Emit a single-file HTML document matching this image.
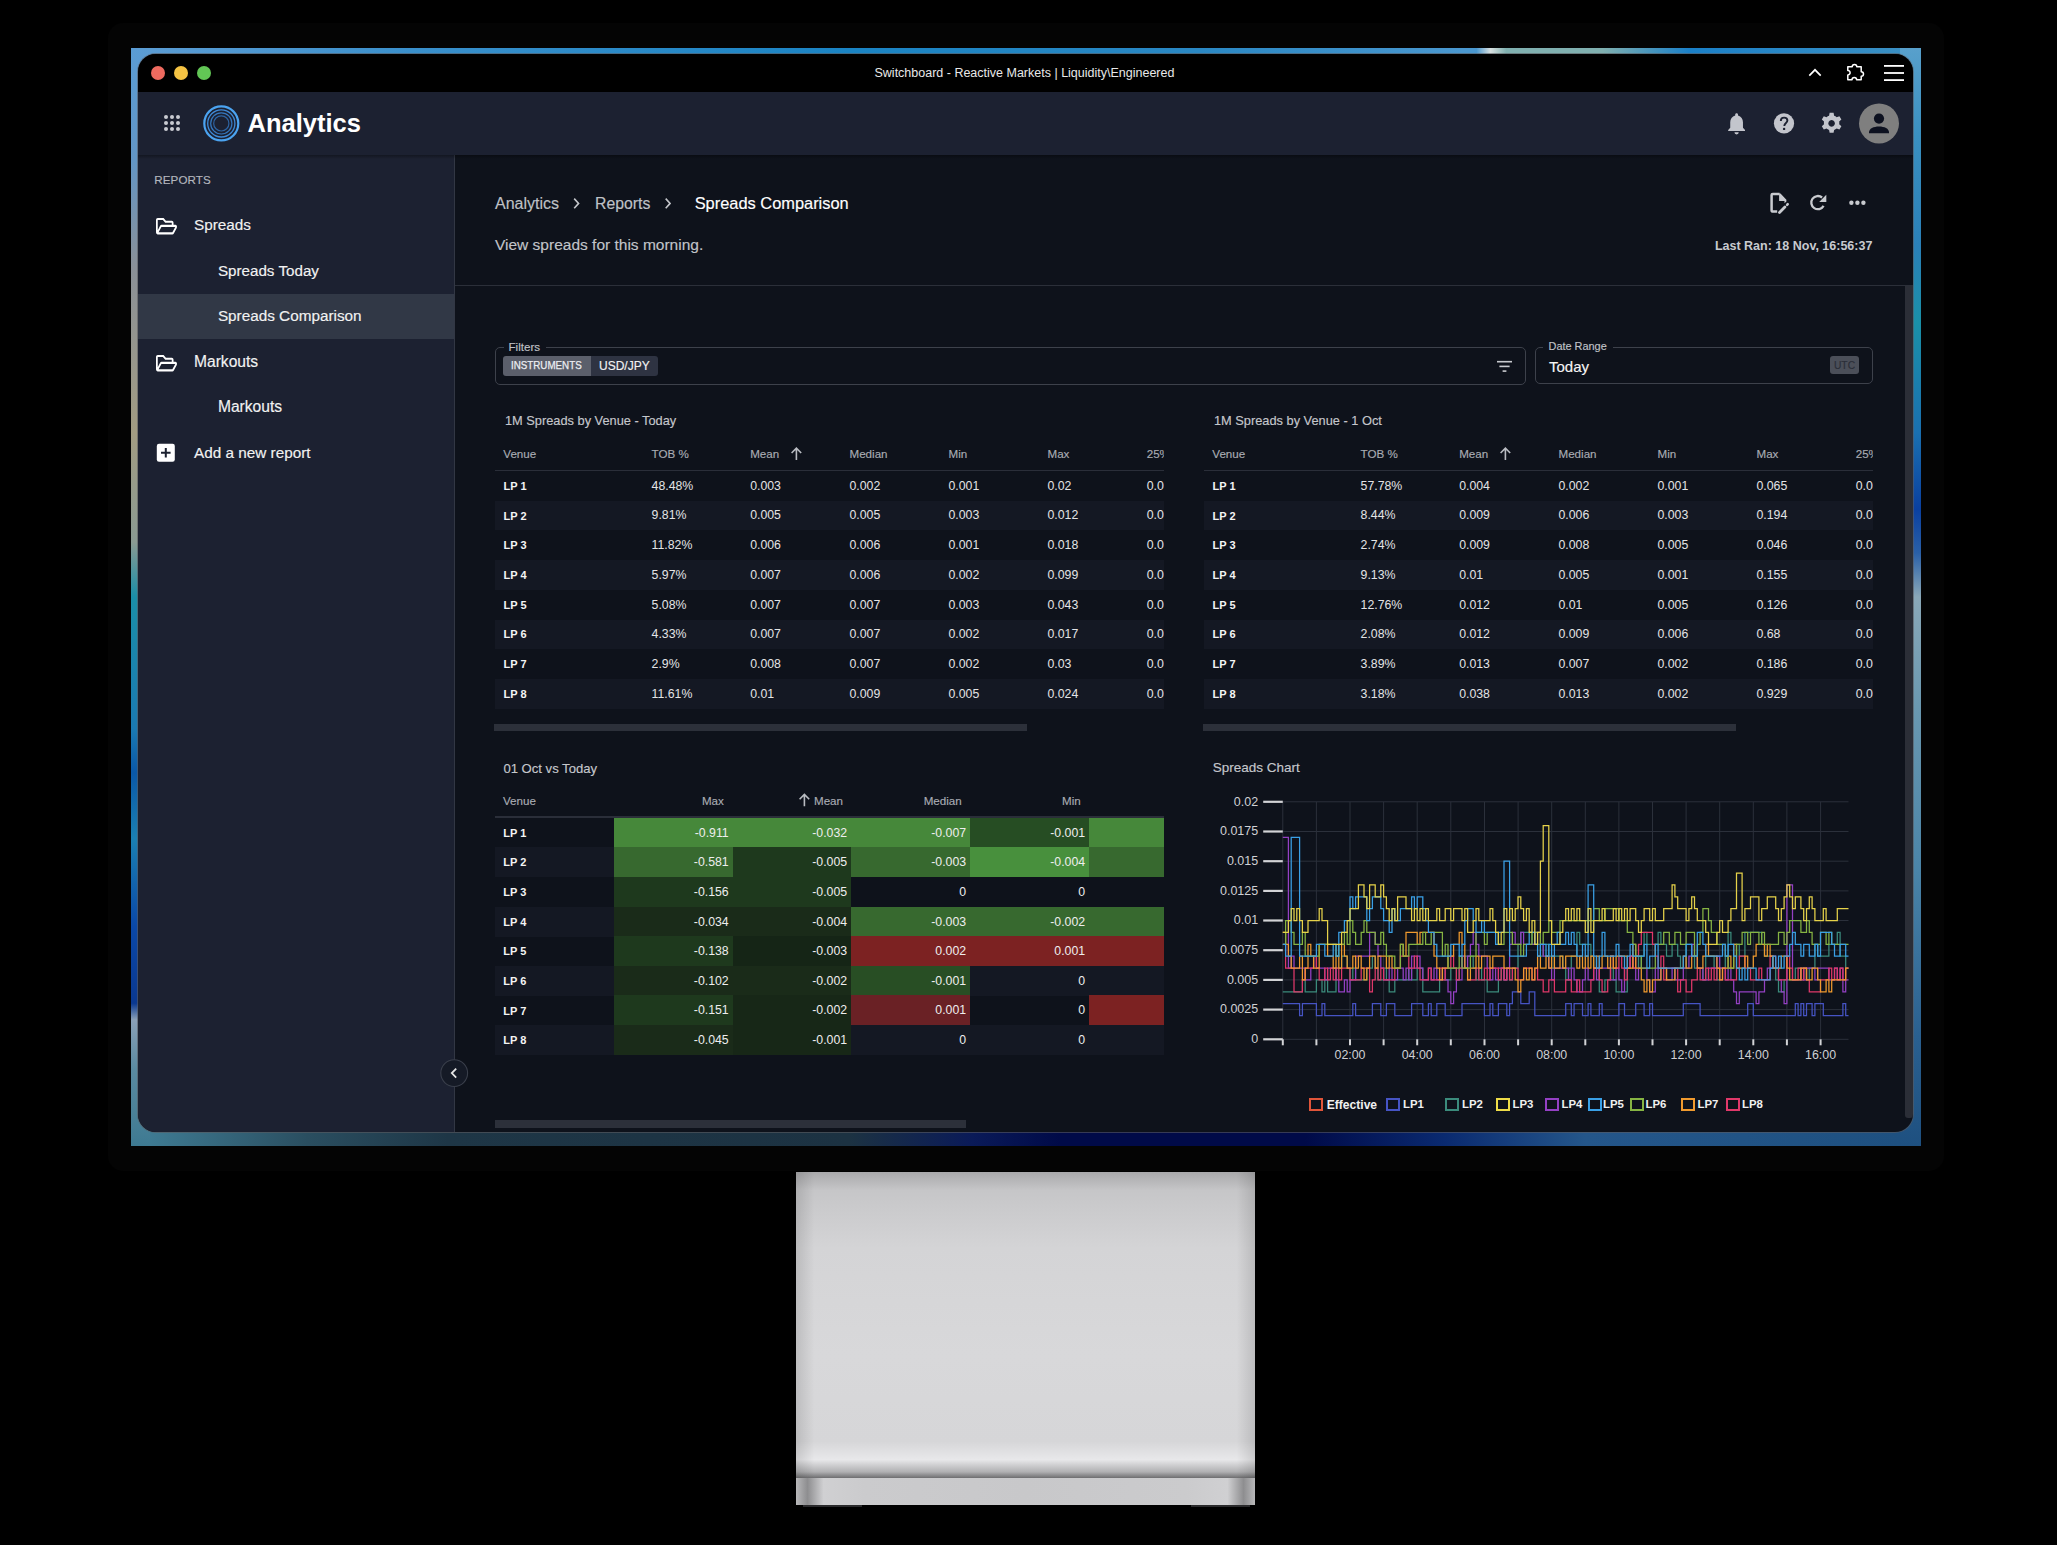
<!DOCTYPE html>
<html><head><meta charset="utf-8"><title>Switchboard</title>
<style>
html,body{margin:0;padding:0;}
body{width:2057px;height:1545px;background:#000;position:relative;overflow:hidden;font-family:"Liberation Sans", sans-serif;}
.t{position:absolute;white-space:nowrap;line-height:1;-webkit-text-stroke:0.15px currentColor;}
.ns{-webkit-text-stroke:0 !important;}
.r{position:absolute;}
svg{position:absolute;}
</style></head><body>

<div class="r" style="left:108.0px;top:23.0px;width:1836.0px;height:1148.0px;background:#040404;border-radius:15px;"></div>
<div class="r" style="left:131px;top:48px;width:1790px;height:1098px;background:linear-gradient(90deg,#3e7a92 0%,#2a4e62 25%,#24465c 45%,#0a1a58 52%,#000a48 68%,#0a2a70 76%,#2a5a8c 85%,#2f6a9a 100%);"></div>
<div class="r" style="left:131.0px;top:48.0px;width:24.0px;height:1098.0px;background:linear-gradient(180deg,#5a9cd4 0%,#6296c6 10%,#8a9098 20%,#a29c82 35%,#8a9a92 45%,#1a8fa8 50%,#1a7ab2 62%,#0a58a8 66%,#1a80b2 72%,#0a48a8 80%,#0a3890 87%,#8aa0b8 88.5%,#5a8aa0 93%,#3e7a92 100%);"></div>
<div class="r" style="left:1897.0px;top:48.0px;width:24.0px;height:1098.0px;background:linear-gradient(180deg,#58a0cc 0%,#3a90c0 8%,#2a80b8 18%,#1a90a8 25%,#1a70b0 35%,#0a40a0 42%,#2a60a8 46%,#8aa8b8 50%,#6a98b0 60%,#4a84a8 75%,#2a6090 90%,#1e5080 100%);"></div>
<div class="r" style="left:150.0px;top:48.0px;width:1750.0px;height:20.0px;background:linear-gradient(90deg,#5a9cd4 0%,#3a90cc 15%,#1a84c4 40%,#2a88c4 60%,#4a98d0 75%,#4a98d0 75.8%,#d8e0e0 76.6%,#80b0b0 77.5%,#80b0b0 83%,#1a80c8 88%,#3a90c4 100%);"></div>
<div class="r" style="left:150.0px;top:1118.0px;width:1750.0px;height:28.0px;background:linear-gradient(90deg,#3e7a92 0%,#2a4e60 9%,#1e3646 17%,#1c3242 40%,#0a1a58 47%,#000a48 52%,#000a48 66%,#0a2a70 74%,#24568a 82%,#1e5080 100%);"></div>
<div class="r" style="left:137.0px;top:53.0px;width:1777.0px;height:1080.0px;background:rgba(90,90,95,0.6);border-radius:19px;"></div>
<div class="r" style="left:0;top:0;width:2057px;height:1545px;clip-path:inset(54px 144px 413px 138px round 18px);">
<div class="r" style="left:138.0px;top:54.0px;width:1775.0px;height:1078.0px;background:#0e121b;"></div>
<div class="r" style="left:138.0px;top:54.0px;width:1775.0px;height:38.0px;background:#000;"></div>
<div class="r" style="left:150.9px;top:66.0px;width:14.0px;height:14.0px;background:#ee6a5f;border-radius:50%;"></div>
<div class="r" style="left:173.7px;top:66.0px;width:14.0px;height:14.0px;background:#f5c343;border-radius:50%;"></div>
<div class="r" style="left:196.5px;top:66.0px;width:14.0px;height:14.0px;background:#62c655;border-radius:50%;"></div>
<div class="t ns" style="left:874.5px;top:66.7px;font-size:12.5px;color:#e9e9e9;">Switchboard - Reactive Markets | Liquidity\Engineered</div>
<svg style="left:1800px;top:58px" width="115" height="30" viewBox="1800 58 115 30">
<path d="M1809.3 75.6 L1815 69.8 L1820.7 75.6" fill="none" stroke="#fff" stroke-width="1.7"/>
<path d="M1847.8 66.8 H1852.2 A2.3 2.3 0 1 1 1856.8 66.8 H1861.2 V71.7 A2.3 2.3 0 1 1 1861.2 76.3 V79.8 H1856.6 A2.3 2.3 0 1 0 1852.0 79.8 H1847.8 V75.0 A2.3 2.3 0 1 0 1847.8 70.4 Z" fill="none" stroke="#fff" stroke-width="1.5" stroke-linejoin="round"/>
<rect x="1884" y="65" width="20" height="1.8" fill="#fff"/>
<rect x="1884" y="72.1" width="20" height="1.8" fill="#fff"/>
<rect x="1884" y="79.2" width="20" height="1.8" fill="#fff"/>
</svg>
<div class="r" style="left:138.0px;top:92.0px;width:1775.0px;height:63.0px;background:#1c2131;"></div>
<div class="r" style="left:163.5px;top:115.3px;width:4.2px;height:4.2px;background:#c9cbd1;border-radius:50%;"></div>
<div class="r" style="left:163.5px;top:121.3px;width:4.2px;height:4.2px;background:#c9cbd1;border-radius:50%;"></div>
<div class="r" style="left:163.5px;top:127.3px;width:4.2px;height:4.2px;background:#c9cbd1;border-radius:50%;"></div>
<div class="r" style="left:169.5px;top:115.3px;width:4.2px;height:4.2px;background:#c9cbd1;border-radius:50%;"></div>
<div class="r" style="left:169.5px;top:121.3px;width:4.2px;height:4.2px;background:#c9cbd1;border-radius:50%;"></div>
<div class="r" style="left:169.5px;top:127.3px;width:4.2px;height:4.2px;background:#c9cbd1;border-radius:50%;"></div>
<div class="r" style="left:175.5px;top:115.3px;width:4.2px;height:4.2px;background:#c9cbd1;border-radius:50%;"></div>
<div class="r" style="left:175.5px;top:121.3px;width:4.2px;height:4.2px;background:#c9cbd1;border-radius:50%;"></div>
<div class="r" style="left:175.5px;top:127.3px;width:4.2px;height:4.2px;background:#c9cbd1;border-radius:50%;"></div>
<svg style="left:200px;top:102px" width="44" height="44" viewBox="0 0 44 44">
<circle cx="21.3" cy="21.4" r="17" fill="none" stroke="#4ba3f0" stroke-width="2.2"/>
<circle cx="21.3" cy="21.4" r="13.6" fill="none" stroke="#3f8ad6" stroke-width="1.3"/>
<circle cx="21.3" cy="21.4" r="10.6" fill="none" stroke="#3577bd" stroke-width="1.2"/>
<circle cx="21.3" cy="21.4" r="7.6" fill="none" stroke="#2e64a2" stroke-width="1.2"/>
</svg>
<div class="t " style="left:247.5px;top:111.0px;font-size:25.5px;color:#ffffff;font-weight:700;-webkit-text-stroke:0;">Analytics</div>
<svg style="left:1720px;top:100px" width="185" height="48" viewBox="1720 100 185 48">
<path transform="translate(1736.6 124.6) scale(1.08) translate(-1736.6 -122.6)" d="M1736.6 112.2 c0.8 0 1.3 0.6 1.3 1.3 v0.6 c2.9 0.7 4.6 3.2 4.6 6.3 v5.2 l1.9 2.1 v0.9 h-15.6 v-0.9 l1.9 -2.1 v-5.2 c0 -3.1 1.7 -5.6 4.6 -6.3 v-0.6 c0 -0.7 0.5 -1.3 1.3 -1.3 z M1734.6 129.7 h4 a2 2 0 0 1 -4 0 z" fill="#c3c5cc"/>
<circle cx="1784" cy="123.4" r="10.1" fill="#c3c5cc"/>
<path d="M1780.8 120.9 c0 -2 1.4 -3.3 3.3 -3.3 c1.9 0 3.3 1.3 3.3 3 c0 2.3 -3.1 2.5 -3.1 5.3" fill="none" stroke="#1c2131" stroke-width="1.9"/>
<circle cx="1784.1" cy="128.9" r="1.2" fill="#1c2131"/>
<g transform="translate(1831.6 123.4) scale(1.1)" fill="#c3c5cc">
<path d="M-1.8 -9.6 h3.6 l0.5 2.6 a7.3 7.3 0 0 1 2.3 1.3 l2.5 -0.9 l1.8 3.1 l-2 1.7 a7.3 7.3 0 0 1 0 2.6 l2 1.7 l-1.8 3.1 l-2.5 -0.9 a7.3 7.3 0 0 1 -2.3 1.3 l-0.5 2.6 h-3.6 l-0.5 -2.6 a7.3 7.3 0 0 1 -2.3 -1.3 l-2.5 0.9 l-1.8 -3.1 l2 -1.7 a7.3 7.3 0 0 1 0 -2.6 l-2 -1.7 l1.8 -3.1 l2.5 0.9 a7.3 7.3 0 0 1 2.3 -1.3 z M0 -3 a3 3 0 1 0 0.01 0 z" fill-rule="evenodd"/>
</g>
<circle cx="1879" cy="123.4" r="20" fill="#7f7f7f"/>
<circle cx="1879" cy="118.6" r="5.1" fill="#0d1120"/>
<path d="M1869 132.4 c0 -4 4.5 -6.0 10 -6.0 s10 2.0 10 6.0 v0.8 h-20 z" fill="#0d1120"/>
</svg>
<div class="r" style="left:138.0px;top:155.0px;width:316.0px;height:977.0px;background:#1c2131;"></div>
<div class="r" style="left:454.0px;top:155.0px;width:1.0px;height:977.0px;background:#323744;"></div>
<div class="r" style="left:138.0px;top:155.0px;width:1775.0px;height:4.0px;background:linear-gradient(180deg,rgba(0,0,0,0.32),rgba(0,0,0,0));"></div>
<div class="r" style="left:138.0px;top:294.0px;width:316.0px;height:45.3px;background:#313846;"></div>
<div class="t " style="left:154.3px;top:174.3px;font-size:11.6px;color:#b4b7be;letter-spacing:0.1px;">REPORTS</div>
<svg style="left:155.8px;top:218.1px" width="23" height="18" viewBox="0 0 23 18"><path transform="scale(0.0365 0.0427) translate(0 -64)" d="M527.9 224H480v-48c0-26.5-21.5-48-48-48H272l-64-64H48C21.5 64 0 85.5 0 112v288c0 26.5 21.5 48 48 48h400c16.5 0 31.9-8.5 40.7-22.6l79.9-128c20-31.9-3-73.4-40.7-73.4zM48 118c0-3.300 2.7-6 6-6h134.1l64 64H426c3.3 0 6 2.7 6 6v42H152c-16.8 0-32.4 8.8-41.1 23.2L48 351.4zm400 282H72l77.2-128H528z" fill="#fff"/></svg>
<svg style="left:155.8px;top:355.3px" width="23" height="18" viewBox="0 0 23 18"><path transform="scale(0.0365 0.0427) translate(0 -64)" d="M527.9 224H480v-48c0-26.5-21.5-48-48-48H272l-64-64H48C21.5 64 0 85.5 0 112v288c0 26.5 21.5 48 48 48h400c16.5 0 31.9-8.5 40.7-22.6l79.9-128c20-31.9-3-73.4-40.7-73.4zM48 118c0-3.300 2.7-6 6-6h134.1l64 64H426c3.3 0 6 2.7 6 6v42H152c-16.8 0-32.4 8.8-41.1 23.2L48 351.4zm400 282H72l77.2-128H528z" fill="#fff"/></svg>
<div class="t " style="left:194.0px;top:217.1px;font-size:15.3px;color:#f2f2f2;">Spreads</div>
<div class="t " style="left:217.9px;top:263.1px;font-size:15.2px;color:#f2f2f2;">Spreads Today</div>
<div class="t " style="left:217.9px;top:308.3px;font-size:15.3px;color:#f2f2f2;">Spreads Comparison</div>
<div class="t " style="left:194.0px;top:354.0px;font-size:15.6px;color:#f2f2f2;">Markouts</div>
<div class="t " style="left:217.9px;top:399.1px;font-size:15.6px;color:#f2f2f2;">Markouts</div>
<div class="t " style="left:194.0px;top:445.2px;font-size:15.3px;color:#f2f2f2;">Add a new report</div>
<svg style="left:156px;top:443px" width="20" height="20" viewBox="0 0 20 20">
<rect x="0.8" y="0.8" width="18" height="18" rx="2.2" fill="#fff"/>
<path d="M9.8 5 v9.6 M5 9.8 h9.6" stroke="#1b2030" stroke-width="2"/>
</svg>
<svg style="left:438px;top:1057px" width="32" height="32" viewBox="0 0 32 32">
<circle cx="16.2" cy="16.1" r="13.4" fill="#151a26" stroke="#3a3f4b" stroke-width="1.1"/>
<path d="M18.2 11.6 L13.8 16.1 L18.2 20.6" fill="none" stroke="#e6e6e6" stroke-width="1.8"/>
</svg>
<div class="t " style="left:495.0px;top:195.5px;font-size:16.0px;color:#bfc1c6;">Analytics</div>
<div class="t " style="left:595.0px;top:195.6px;font-size:15.8px;color:#bfc1c6;">Reports</div>
<div class="t " style="left:694.7px;top:195.1px;font-size:16.4px;color:#ffffff;">Spreads Comparison</div>
<svg style="left:565px;top:190px" width="120" height="26" viewBox="565 190 120 26">
<path d="M574.2 198.6 L578.6 203.4 L574.2 208.2" fill="none" stroke="#c3c5ca" stroke-width="1.6"/>
<path d="M665.7 198.6 L670.1 203.4 L665.7 208.2" fill="none" stroke="#c3c5ca" stroke-width="1.6"/>
</svg>
<div class="t " style="left:495.0px;top:237.1px;font-size:15.5px;color:#c2c4c9;">View spreads for this morning.</div>
<div class="t " style="right:184.6px;top:239.8px;font-size:12.5px;color:#c8cacf;font-weight:700;-webkit-text-stroke:0;">Last Ran: 18 Nov, 16:56:37</div>
<svg style="left:1760px;top:185px" width="115" height="36" viewBox="1760 185 115 36">
<path d="M1777.2 211.6 h-4.4 a1.2 1.2 0 0 1 -1.2 -1.2 v-15.3 a1.2 1.2 0 0 1 1.2 -1.2 h6.8" fill="none" stroke="#c8cacf" stroke-width="2.5" stroke-linejoin="round"/>
<path d="M1779.1 193.6 h1.4 l5.9 6.1 v1.9 l-1.9 1.6 v-2.3 h-5.4 z" fill="#c8cacf"/>
<path d="M1779.5 212.4 l5.4 -5.4" stroke="#c8cacf" stroke-width="2.8" stroke-linecap="round"/>
<path d="M1787.1 204.8 l0.6 -0.6" stroke="#c8cacf" stroke-width="2.6" stroke-linecap="round"/>
<path d="M1823.6 205.9 A6.6 6.6 0 1 1 1822.1 197.5" fill="none" stroke="#c8cacf" stroke-width="2.3"/>
<path d="M1819.2 201.9 L1826.3 194.8 L1826.3 201.9 Z" fill="#c8cacf"/>
<circle cx="1851.4" cy="202.8" r="2.2" fill="#c8cacf"/>
<circle cx="1857.4" cy="202.8" r="2.2" fill="#c8cacf"/>
<circle cx="1863.4" cy="202.8" r="2.2" fill="#c8cacf"/>
</svg>
<div class="r" style="left:455.0px;top:285.0px;width:1458.0px;height:1.0px;background:#2b2f39;"></div>
<div class="r" style="left:1905.0px;top:286.0px;width:7.5px;height:832.0px;background:#2b2e37;border-radius:0 0 3px 3px;"></div>
<div class="r" style="left:494.6px;top:347.2px;width:1031px;height:37.6px;border:1px solid #3d414b;border-radius:5px;box-sizing:border-box;"></div>
<div class="r" style="left:504.0px;top:344.0px;width:42.0px;height:6.0px;background:#0e121b;"></div>
<div class="t " style="left:508.5px;top:340.5px;font-size:11.6px;color:#c0c2c7;">Filters</div>
<div class="r" style="left:503.0px;top:356.0px;width:88.0px;height:20.0px;background:#5b5f6b;border-radius:3px 0 0 3px;"></div>
<div class="r" style="left:591.0px;top:356.0px;width:67.0px;height:20.0px;background:#2e3342;border-radius:0 3px 3px 0;"></div>
<div class="t " style="left:511.1px;top:360.4px;font-size:11.2px;color:#eceef2;transform:scaleX(0.875);transform-origin:0 0;-webkit-text-stroke:0.25px #eceef2;">INSTRUMENTS</div>
<div class="t " style="left:599.0px;top:359.8px;font-size:12.0px;color:#f2f2f2;">USD/JPY</div>
<svg style="left:1494px;top:358px" width="20" height="16" viewBox="1494 358 20 16">
<rect x="1497" y="360.9" width="15" height="1.6" fill="#c8cacf"/>
<rect x="1499.4" y="365.6" width="10.2" height="1.6" fill="#c8cacf"/>
<rect x="1502.6" y="370.3" width="3.8" height="1.6" fill="#c8cacf"/>
</svg>
<div class="r" style="left:1534.6px;top:347.4px;width:338.2px;height:37px;border:1px solid #3d414b;border-radius:5px;box-sizing:border-box;"></div>
<div class="r" style="left:1543.0px;top:344.0px;width:70.0px;height:6.0px;background:#0e121b;"></div>
<div class="t " style="left:1548.6px;top:341.2px;font-size:10.9px;color:#c0c2c7;">Date Range</div>
<div class="t " style="left:1549.0px;top:358.7px;font-size:15.0px;color:#f5f5f5;">Today</div>
<div class="r" style="left:1830.2px;top:356.1px;width:28.6px;height:18.4px;background:#4b4f59;border-radius:3px;"></div>
<div class="t " style="left:1844.5px;transform:translateX(-50%);top:360.6px;font-size:10.3px;color:#2a2e38;">UTC</div>
<div class="t " style="left:505.0px;top:415.1px;font-size:12.8px;color:#c5c7cc;">1M Spreads by Venue - Today</div>
<div class="r" style="left:0;top:0;width:2057px;height:1545px;clip-path:inset(400px 893.0px 800px 494.8px);">
<div class="t " style="left:503.3px;top:447.8px;font-size:11.6px;color:#a9acb3;">Venue</div>
<div class="t " style="left:651.6px;top:447.8px;font-size:11.6px;color:#a9acb3;">TOB %</div>
<div class="t " style="left:750.2px;top:447.8px;font-size:11.6px;color:#a9acb3;">Mean</div>
<div class="t " style="left:849.5px;top:447.8px;font-size:11.6px;color:#a9acb3;">Median</div>
<div class="t " style="left:948.5px;top:447.8px;font-size:11.6px;color:#a9acb3;">Min</div>
<div class="t " style="left:1047.5px;top:447.8px;font-size:11.6px;color:#a9acb3;">Max</div>
<div class="t " style="left:1146.7px;top:447.8px;font-size:11.6px;color:#a9acb3;">25%</div>
<svg style="left:786px;top:446px" width="20" height="16" viewBox="0 0 20 16"><path d="M10.4 2.4 v11.6 M5.6 7 L10.4 2.2 L15.2 7" fill="none" stroke="#b9bcc2" stroke-width="1.6"/></svg>
<div class="r" style="left:494.8px;top:469.6px;width:669.2px;height:1.2px;background:#2a2e39;"></div>
<div class="t " style="left:503.6px;top:480.8px;font-size:11.0px;color:#f4f4f4;font-weight:700;-webkit-text-stroke:0;">LP 1</div>
<div class="t ns" style="left:651.6px;top:479.7px;font-size:12.3px;color:#e3e4e6;">48.48%</div>
<div class="t ns" style="left:750.2px;top:479.7px;font-size:12.3px;color:#e3e4e6;">0.003</div>
<div class="t ns" style="left:849.5px;top:479.7px;font-size:12.3px;color:#e3e4e6;">0.002</div>
<div class="t ns" style="left:948.5px;top:479.7px;font-size:12.3px;color:#e3e4e6;">0.001</div>
<div class="t ns" style="left:1047.5px;top:479.7px;font-size:12.3px;color:#e3e4e6;">0.02</div>
<div class="t ns" style="left:1146.7px;top:479.7px;font-size:12.3px;color:#e3e4e6;">0.003</div>
<div class="r" style="left:494.8px;top:500.7px;width:669.2px;height:29.7px;background:#141823;"></div>
<div class="t " style="left:503.6px;top:510.5px;font-size:11.0px;color:#f4f4f4;font-weight:700;-webkit-text-stroke:0;">LP 2</div>
<div class="t ns" style="left:651.6px;top:509.4px;font-size:12.3px;color:#e3e4e6;">9.81%</div>
<div class="t ns" style="left:750.2px;top:509.4px;font-size:12.3px;color:#e3e4e6;">0.005</div>
<div class="t ns" style="left:849.5px;top:509.4px;font-size:12.3px;color:#e3e4e6;">0.005</div>
<div class="t ns" style="left:948.5px;top:509.4px;font-size:12.3px;color:#e3e4e6;">0.003</div>
<div class="t ns" style="left:1047.5px;top:509.4px;font-size:12.3px;color:#e3e4e6;">0.012</div>
<div class="t ns" style="left:1146.7px;top:509.4px;font-size:12.3px;color:#e3e4e6;">0.004</div>
<div class="t " style="left:503.6px;top:540.2px;font-size:11.0px;color:#f4f4f4;font-weight:700;-webkit-text-stroke:0;">LP 3</div>
<div class="t ns" style="left:651.6px;top:539.1px;font-size:12.3px;color:#e3e4e6;">11.82%</div>
<div class="t ns" style="left:750.2px;top:539.1px;font-size:12.3px;color:#e3e4e6;">0.006</div>
<div class="t ns" style="left:849.5px;top:539.1px;font-size:12.3px;color:#e3e4e6;">0.006</div>
<div class="t ns" style="left:948.5px;top:539.1px;font-size:12.3px;color:#e3e4e6;">0.001</div>
<div class="t ns" style="left:1047.5px;top:539.1px;font-size:12.3px;color:#e3e4e6;">0.018</div>
<div class="t ns" style="left:1146.7px;top:539.1px;font-size:12.3px;color:#e3e4e6;">0.004</div>
<div class="r" style="left:494.8px;top:560.1px;width:669.2px;height:29.7px;background:#141823;"></div>
<div class="t " style="left:503.6px;top:569.9px;font-size:11.0px;color:#f4f4f4;font-weight:700;-webkit-text-stroke:0;">LP 4</div>
<div class="t ns" style="left:651.6px;top:568.8px;font-size:12.3px;color:#e3e4e6;">5.97%</div>
<div class="t ns" style="left:750.2px;top:568.8px;font-size:12.3px;color:#e3e4e6;">0.007</div>
<div class="t ns" style="left:849.5px;top:568.8px;font-size:12.3px;color:#e3e4e6;">0.006</div>
<div class="t ns" style="left:948.5px;top:568.8px;font-size:12.3px;color:#e3e4e6;">0.002</div>
<div class="t ns" style="left:1047.5px;top:568.8px;font-size:12.3px;color:#e3e4e6;">0.099</div>
<div class="t ns" style="left:1146.7px;top:568.8px;font-size:12.3px;color:#e3e4e6;">0.004</div>
<div class="t " style="left:503.6px;top:599.6px;font-size:11.0px;color:#f4f4f4;font-weight:700;-webkit-text-stroke:0;">LP 5</div>
<div class="t ns" style="left:651.6px;top:598.5px;font-size:12.3px;color:#e3e4e6;">5.08%</div>
<div class="t ns" style="left:750.2px;top:598.5px;font-size:12.3px;color:#e3e4e6;">0.007</div>
<div class="t ns" style="left:849.5px;top:598.5px;font-size:12.3px;color:#e3e4e6;">0.007</div>
<div class="t ns" style="left:948.5px;top:598.5px;font-size:12.3px;color:#e3e4e6;">0.003</div>
<div class="t ns" style="left:1047.5px;top:598.5px;font-size:12.3px;color:#e3e4e6;">0.043</div>
<div class="t ns" style="left:1146.7px;top:598.5px;font-size:12.3px;color:#e3e4e6;">0.005</div>
<div class="r" style="left:494.8px;top:619.5px;width:669.2px;height:29.7px;background:#141823;"></div>
<div class="t " style="left:503.6px;top:629.3px;font-size:11.0px;color:#f4f4f4;font-weight:700;-webkit-text-stroke:0;">LP 6</div>
<div class="t ns" style="left:651.6px;top:628.2px;font-size:12.3px;color:#e3e4e6;">4.33%</div>
<div class="t ns" style="left:750.2px;top:628.2px;font-size:12.3px;color:#e3e4e6;">0.007</div>
<div class="t ns" style="left:849.5px;top:628.2px;font-size:12.3px;color:#e3e4e6;">0.007</div>
<div class="t ns" style="left:948.5px;top:628.2px;font-size:12.3px;color:#e3e4e6;">0.002</div>
<div class="t ns" style="left:1047.5px;top:628.2px;font-size:12.3px;color:#e3e4e6;">0.017</div>
<div class="t ns" style="left:1146.7px;top:628.2px;font-size:12.3px;color:#e3e4e6;">0.005</div>
<div class="t " style="left:503.6px;top:659.0px;font-size:11.0px;color:#f4f4f4;font-weight:700;-webkit-text-stroke:0;">LP 7</div>
<div class="t ns" style="left:651.6px;top:657.9px;font-size:12.3px;color:#e3e4e6;">2.9%</div>
<div class="t ns" style="left:750.2px;top:657.9px;font-size:12.3px;color:#e3e4e6;">0.008</div>
<div class="t ns" style="left:849.5px;top:657.9px;font-size:12.3px;color:#e3e4e6;">0.007</div>
<div class="t ns" style="left:948.5px;top:657.9px;font-size:12.3px;color:#e3e4e6;">0.002</div>
<div class="t ns" style="left:1047.5px;top:657.9px;font-size:12.3px;color:#e3e4e6;">0.03</div>
<div class="t ns" style="left:1146.7px;top:657.9px;font-size:12.3px;color:#e3e4e6;">0.005</div>
<div class="r" style="left:494.8px;top:678.9px;width:669.2px;height:29.7px;background:#141823;"></div>
<div class="t " style="left:503.6px;top:688.7px;font-size:11.0px;color:#f4f4f4;font-weight:700;-webkit-text-stroke:0;">LP 8</div>
<div class="t ns" style="left:651.6px;top:687.6px;font-size:12.3px;color:#e3e4e6;">11.61%</div>
<div class="t ns" style="left:750.2px;top:687.6px;font-size:12.3px;color:#e3e4e6;">0.01</div>
<div class="t ns" style="left:849.5px;top:687.6px;font-size:12.3px;color:#e3e4e6;">0.009</div>
<div class="t ns" style="left:948.5px;top:687.6px;font-size:12.3px;color:#e3e4e6;">0.005</div>
<div class="t ns" style="left:1047.5px;top:687.6px;font-size:12.3px;color:#e3e4e6;">0.024</div>
<div class="t ns" style="left:1146.7px;top:687.6px;font-size:12.3px;color:#e3e4e6;">0.006</div>
</div>
<div class="t " style="left:1214.0px;top:415.1px;font-size:12.8px;color:#c5c7cc;">1M Spreads by Venue - 1 Oct</div>
<div class="r" style="left:0;top:0;width:2057px;height:1545px;clip-path:inset(400px 184.0px 800px 1203.8px);">
<div class="t " style="left:1212.3px;top:447.8px;font-size:11.6px;color:#a9acb3;">Venue</div>
<div class="t " style="left:1360.6px;top:447.8px;font-size:11.6px;color:#a9acb3;">TOB %</div>
<div class="t " style="left:1459.2px;top:447.8px;font-size:11.6px;color:#a9acb3;">Mean</div>
<div class="t " style="left:1558.5px;top:447.8px;font-size:11.6px;color:#a9acb3;">Median</div>
<div class="t " style="left:1657.5px;top:447.8px;font-size:11.6px;color:#a9acb3;">Min</div>
<div class="t " style="left:1756.5px;top:447.8px;font-size:11.6px;color:#a9acb3;">Max</div>
<div class="t " style="left:1855.7px;top:447.8px;font-size:11.6px;color:#a9acb3;">25%</div>
<svg style="left:1495px;top:446px" width="20" height="16" viewBox="0 0 20 16"><path d="M10.4 2.4 v11.6 M5.6 7 L10.4 2.2 L15.2 7" fill="none" stroke="#b9bcc2" stroke-width="1.6"/></svg>
<div class="r" style="left:1203.8px;top:469.6px;width:669.2px;height:1.2px;background:#2a2e39;"></div>
<div class="t " style="left:1212.6px;top:480.8px;font-size:11.0px;color:#f4f4f4;font-weight:700;-webkit-text-stroke:0;">LP 1</div>
<div class="t ns" style="left:1360.6px;top:479.7px;font-size:12.3px;color:#e3e4e6;">57.78%</div>
<div class="t ns" style="left:1459.2px;top:479.7px;font-size:12.3px;color:#e3e4e6;">0.004</div>
<div class="t ns" style="left:1558.5px;top:479.7px;font-size:12.3px;color:#e3e4e6;">0.002</div>
<div class="t ns" style="left:1657.5px;top:479.7px;font-size:12.3px;color:#e3e4e6;">0.001</div>
<div class="t ns" style="left:1756.5px;top:479.7px;font-size:12.3px;color:#e3e4e6;">0.065</div>
<div class="t ns" style="left:1855.7px;top:479.7px;font-size:12.3px;color:#e3e4e6;">0.003</div>
<div class="r" style="left:1203.8px;top:500.7px;width:669.2px;height:29.7px;background:#141823;"></div>
<div class="t " style="left:1212.6px;top:510.5px;font-size:11.0px;color:#f4f4f4;font-weight:700;-webkit-text-stroke:0;">LP 2</div>
<div class="t ns" style="left:1360.6px;top:509.4px;font-size:12.3px;color:#e3e4e6;">8.44%</div>
<div class="t ns" style="left:1459.2px;top:509.4px;font-size:12.3px;color:#e3e4e6;">0.009</div>
<div class="t ns" style="left:1558.5px;top:509.4px;font-size:12.3px;color:#e3e4e6;">0.006</div>
<div class="t ns" style="left:1657.5px;top:509.4px;font-size:12.3px;color:#e3e4e6;">0.003</div>
<div class="t ns" style="left:1756.5px;top:509.4px;font-size:12.3px;color:#e3e4e6;">0.194</div>
<div class="t ns" style="left:1855.7px;top:509.4px;font-size:12.3px;color:#e3e4e6;">0.004</div>
<div class="t " style="left:1212.6px;top:540.2px;font-size:11.0px;color:#f4f4f4;font-weight:700;-webkit-text-stroke:0;">LP 3</div>
<div class="t ns" style="left:1360.6px;top:539.1px;font-size:12.3px;color:#e3e4e6;">2.74%</div>
<div class="t ns" style="left:1459.2px;top:539.1px;font-size:12.3px;color:#e3e4e6;">0.009</div>
<div class="t ns" style="left:1558.5px;top:539.1px;font-size:12.3px;color:#e3e4e6;">0.008</div>
<div class="t ns" style="left:1657.5px;top:539.1px;font-size:12.3px;color:#e3e4e6;">0.005</div>
<div class="t ns" style="left:1756.5px;top:539.1px;font-size:12.3px;color:#e3e4e6;">0.046</div>
<div class="t ns" style="left:1855.7px;top:539.1px;font-size:12.3px;color:#e3e4e6;">0.006</div>
<div class="r" style="left:1203.8px;top:560.1px;width:669.2px;height:29.7px;background:#141823;"></div>
<div class="t " style="left:1212.6px;top:569.9px;font-size:11.0px;color:#f4f4f4;font-weight:700;-webkit-text-stroke:0;">LP 4</div>
<div class="t ns" style="left:1360.6px;top:568.8px;font-size:12.3px;color:#e3e4e6;">9.13%</div>
<div class="t ns" style="left:1459.2px;top:568.8px;font-size:12.3px;color:#e3e4e6;">0.01</div>
<div class="t ns" style="left:1558.5px;top:568.8px;font-size:12.3px;color:#e3e4e6;">0.005</div>
<div class="t ns" style="left:1657.5px;top:568.8px;font-size:12.3px;color:#e3e4e6;">0.001</div>
<div class="t ns" style="left:1756.5px;top:568.8px;font-size:12.3px;color:#e3e4e6;">0.155</div>
<div class="t ns" style="left:1855.7px;top:568.8px;font-size:12.3px;color:#e3e4e6;">0.004</div>
<div class="t " style="left:1212.6px;top:599.6px;font-size:11.0px;color:#f4f4f4;font-weight:700;-webkit-text-stroke:0;">LP 5</div>
<div class="t ns" style="left:1360.6px;top:598.5px;font-size:12.3px;color:#e3e4e6;">12.76%</div>
<div class="t ns" style="left:1459.2px;top:598.5px;font-size:12.3px;color:#e3e4e6;">0.012</div>
<div class="t ns" style="left:1558.5px;top:598.5px;font-size:12.3px;color:#e3e4e6;">0.01</div>
<div class="t ns" style="left:1657.5px;top:598.5px;font-size:12.3px;color:#e3e4e6;">0.005</div>
<div class="t ns" style="left:1756.5px;top:598.5px;font-size:12.3px;color:#e3e4e6;">0.126</div>
<div class="t ns" style="left:1855.7px;top:598.5px;font-size:12.3px;color:#e3e4e6;">0.007</div>
<div class="r" style="left:1203.8px;top:619.5px;width:669.2px;height:29.7px;background:#141823;"></div>
<div class="t " style="left:1212.6px;top:629.3px;font-size:11.0px;color:#f4f4f4;font-weight:700;-webkit-text-stroke:0;">LP 6</div>
<div class="t ns" style="left:1360.6px;top:628.2px;font-size:12.3px;color:#e3e4e6;">2.08%</div>
<div class="t ns" style="left:1459.2px;top:628.2px;font-size:12.3px;color:#e3e4e6;">0.012</div>
<div class="t ns" style="left:1558.5px;top:628.2px;font-size:12.3px;color:#e3e4e6;">0.009</div>
<div class="t ns" style="left:1657.5px;top:628.2px;font-size:12.3px;color:#e3e4e6;">0.006</div>
<div class="t ns" style="left:1756.5px;top:628.2px;font-size:12.3px;color:#e3e4e6;">0.68</div>
<div class="t ns" style="left:1855.7px;top:628.2px;font-size:12.3px;color:#e3e4e6;">0.006</div>
<div class="t " style="left:1212.6px;top:659.0px;font-size:11.0px;color:#f4f4f4;font-weight:700;-webkit-text-stroke:0;">LP 7</div>
<div class="t ns" style="left:1360.6px;top:657.9px;font-size:12.3px;color:#e3e4e6;">3.89%</div>
<div class="t ns" style="left:1459.2px;top:657.9px;font-size:12.3px;color:#e3e4e6;">0.013</div>
<div class="t ns" style="left:1558.5px;top:657.9px;font-size:12.3px;color:#e3e4e6;">0.007</div>
<div class="t ns" style="left:1657.5px;top:657.9px;font-size:12.3px;color:#e3e4e6;">0.002</div>
<div class="t ns" style="left:1756.5px;top:657.9px;font-size:12.3px;color:#e3e4e6;">0.186</div>
<div class="t ns" style="left:1855.7px;top:657.9px;font-size:12.3px;color:#e3e4e6;">0.005</div>
<div class="r" style="left:1203.8px;top:678.9px;width:669.2px;height:29.7px;background:#141823;"></div>
<div class="t " style="left:1212.6px;top:688.7px;font-size:11.0px;color:#f4f4f4;font-weight:700;-webkit-text-stroke:0;">LP 8</div>
<div class="t ns" style="left:1360.6px;top:687.6px;font-size:12.3px;color:#e3e4e6;">3.18%</div>
<div class="t ns" style="left:1459.2px;top:687.6px;font-size:12.3px;color:#e3e4e6;">0.038</div>
<div class="t ns" style="left:1558.5px;top:687.6px;font-size:12.3px;color:#e3e4e6;">0.013</div>
<div class="t ns" style="left:1657.5px;top:687.6px;font-size:12.3px;color:#e3e4e6;">0.002</div>
<div class="t ns" style="left:1756.5px;top:687.6px;font-size:12.3px;color:#e3e4e6;">0.929</div>
<div class="t ns" style="left:1855.7px;top:687.6px;font-size:12.3px;color:#e3e4e6;">0.007</div>
</div>
<div class="r" style="left:494.4px;top:724.0px;width:532.4px;height:7.2px;background:#2c303a;"></div>
<div class="r" style="left:1203.4px;top:724.0px;width:532.4px;height:7.2px;background:#2c303a;"></div>
<div class="t " style="left:503.4px;top:761.5px;font-size:13.1px;color:#c5c7cc;">01 Oct vs Today</div>
<div class="t " style="left:503.0px;top:795.4px;font-size:11.6px;color:#a9acb3;">Venue</div>
<div class="t " style="right:1333.2px;top:795.4px;font-size:11.6px;color:#a9acb3;">Max</div>
<div class="t " style="right:1214.0px;top:795.4px;font-size:11.6px;color:#a9acb3;">Mean</div>
<div class="t " style="right:1095.3px;top:795.4px;font-size:11.6px;color:#a9acb3;">Median</div>
<div class="t " style="right:976.3px;top:795.4px;font-size:11.6px;color:#a9acb3;">Min</div>
<svg style="left:794px;top:792px" width="20" height="16" viewBox="0 0 20 16"><path d="M10.4 2.6 v11.6 M5.6 7.2 L10.4 2.4 L15.2 7.2" fill="none" stroke="#b9bcc2" stroke-width="1.6"/></svg>
<div class="r" style="left:494.8px;top:816.4px;width:669.2px;height:1.2px;background:#2a2e39;"></div>
<div class="r" style="left:613.5px;top:817.6px;width:119.0px;height:30.2px;background:#46883a;"></div>
<div class="r" style="left:732.5px;top:817.6px;width:118.4px;height:30.2px;background:#46883a;"></div>
<div class="r" style="left:850.9px;top:817.6px;width:119.0px;height:30.2px;background:#46883a;"></div>
<div class="r" style="left:969.9px;top:817.6px;width:119.0px;height:30.2px;background:#264d23;"></div>
<div class="r" style="left:1088.9px;top:817.6px;width:75.1px;height:30.2px;background:#46883a;"></div>
<div class="t " style="left:503.3px;top:827.7px;font-size:11.0px;color:#f4f4f4;font-weight:700;-webkit-text-stroke:0;">LP 1</div>
<div class="t ns" style="right:1328.3px;top:826.6px;font-size:12.3px;color:#eeeeee;">-0.911</div>
<div class="t ns" style="right:1209.9px;top:826.6px;font-size:12.3px;color:#eeeeee;">-0.032</div>
<div class="t ns" style="right:1090.9px;top:826.6px;font-size:12.3px;color:#eeeeee;">-0.007</div>
<div class="t ns" style="right:971.9px;top:826.6px;font-size:12.3px;color:#eeeeee;">-0.001</div>
<div class="r" style="left:494.8px;top:847.2px;width:669.2px;height:30.2px;background:#141823;"></div>
<div class="r" style="left:613.5px;top:847.2px;width:119.0px;height:30.2px;background:#37692f;"></div>
<div class="r" style="left:732.5px;top:847.2px;width:118.4px;height:30.2px;background:#1e391d;"></div>
<div class="r" style="left:850.9px;top:847.2px;width:119.0px;height:30.2px;background:#37692f;"></div>
<div class="r" style="left:969.9px;top:847.2px;width:119.0px;height:30.2px;background:#48903d;"></div>
<div class="r" style="left:1088.9px;top:847.2px;width:75.1px;height:30.2px;background:#37692f;"></div>
<div class="t " style="left:503.3px;top:857.3px;font-size:11.0px;color:#f4f4f4;font-weight:700;-webkit-text-stroke:0;">LP 2</div>
<div class="t ns" style="right:1328.3px;top:856.2px;font-size:12.3px;color:#eeeeee;">-0.581</div>
<div class="t ns" style="right:1209.9px;top:856.2px;font-size:12.3px;color:#eeeeee;">-0.005</div>
<div class="t ns" style="right:1090.9px;top:856.2px;font-size:12.3px;color:#eeeeee;">-0.003</div>
<div class="t ns" style="right:971.9px;top:856.2px;font-size:12.3px;color:#eeeeee;">-0.004</div>
<div class="r" style="left:613.5px;top:876.9px;width:119.0px;height:30.2px;background:#1e391d;"></div>
<div class="r" style="left:732.5px;top:876.9px;width:118.4px;height:30.2px;background:#1e391d;"></div>
<div class="t " style="left:503.3px;top:886.9px;font-size:11.0px;color:#f4f4f4;font-weight:700;-webkit-text-stroke:0;">LP 3</div>
<div class="t ns" style="right:1328.3px;top:885.8px;font-size:12.3px;color:#eeeeee;">-0.156</div>
<div class="t ns" style="right:1209.9px;top:885.8px;font-size:12.3px;color:#eeeeee;">-0.005</div>
<div class="t ns" style="right:1090.9px;top:885.8px;font-size:12.3px;color:#eeeeee;">0</div>
<div class="t ns" style="right:971.9px;top:885.8px;font-size:12.3px;color:#eeeeee;">0</div>
<div class="r" style="left:494.8px;top:906.5px;width:669.2px;height:30.2px;background:#141823;"></div>
<div class="r" style="left:613.5px;top:906.5px;width:119.0px;height:30.2px;background:#1a2b19;"></div>
<div class="r" style="left:732.5px;top:906.5px;width:118.4px;height:30.2px;background:#1a2b19;"></div>
<div class="r" style="left:850.9px;top:906.5px;width:119.0px;height:30.2px;background:#37692f;"></div>
<div class="r" style="left:969.9px;top:906.5px;width:119.0px;height:30.2px;background:#37692f;"></div>
<div class="r" style="left:1088.9px;top:906.5px;width:75.1px;height:30.2px;background:#37692f;"></div>
<div class="t " style="left:503.3px;top:916.6px;font-size:11.0px;color:#f4f4f4;font-weight:700;-webkit-text-stroke:0;">LP 4</div>
<div class="t ns" style="right:1328.3px;top:915.5px;font-size:12.3px;color:#eeeeee;">-0.034</div>
<div class="t ns" style="right:1209.9px;top:915.5px;font-size:12.3px;color:#eeeeee;">-0.004</div>
<div class="t ns" style="right:1090.9px;top:915.5px;font-size:12.3px;color:#eeeeee;">-0.003</div>
<div class="t ns" style="right:971.9px;top:915.5px;font-size:12.3px;color:#eeeeee;">-0.002</div>
<div class="r" style="left:613.5px;top:936.1px;width:119.0px;height:30.2px;background:#1e391d;"></div>
<div class="r" style="left:732.5px;top:936.1px;width:118.4px;height:30.2px;background:#152516;"></div>
<div class="r" style="left:850.9px;top:936.1px;width:119.0px;height:30.2px;background:#7c2222;"></div>
<div class="r" style="left:969.9px;top:936.1px;width:119.0px;height:30.2px;background:#7c2222;"></div>
<div class="r" style="left:1088.9px;top:936.1px;width:75.1px;height:30.2px;background:#7c2222;"></div>
<div class="t " style="left:503.3px;top:946.2px;font-size:11.0px;color:#f4f4f4;font-weight:700;-webkit-text-stroke:0;">LP 5</div>
<div class="t ns" style="right:1328.3px;top:945.1px;font-size:12.3px;color:#eeeeee;">-0.138</div>
<div class="t ns" style="right:1209.9px;top:945.1px;font-size:12.3px;color:#eeeeee;">-0.003</div>
<div class="t ns" style="right:1090.9px;top:945.1px;font-size:12.3px;color:#eeeeee;">0.002</div>
<div class="t ns" style="right:971.9px;top:945.1px;font-size:12.3px;color:#eeeeee;">0.001</div>
<div class="r" style="left:494.8px;top:965.8px;width:669.2px;height:30.2px;background:#141823;"></div>
<div class="r" style="left:613.5px;top:965.8px;width:119.0px;height:30.2px;background:#1a2b19;"></div>
<div class="r" style="left:732.5px;top:965.8px;width:118.4px;height:30.2px;background:#1a2b19;"></div>
<div class="r" style="left:850.9px;top:965.8px;width:119.0px;height:30.2px;background:#284e24;"></div>
<div class="t " style="left:503.3px;top:975.8px;font-size:11.0px;color:#f4f4f4;font-weight:700;-webkit-text-stroke:0;">LP 6</div>
<div class="t ns" style="right:1328.3px;top:974.7px;font-size:12.3px;color:#eeeeee;">-0.102</div>
<div class="t ns" style="right:1209.9px;top:974.7px;font-size:12.3px;color:#eeeeee;">-0.002</div>
<div class="t ns" style="right:1090.9px;top:974.7px;font-size:12.3px;color:#eeeeee;">-0.001</div>
<div class="t ns" style="right:971.9px;top:974.7px;font-size:12.3px;color:#eeeeee;">0</div>
<div class="r" style="left:613.5px;top:995.4px;width:119.0px;height:30.2px;background:#1e391d;"></div>
<div class="r" style="left:732.5px;top:995.4px;width:118.4px;height:30.2px;background:#172717;"></div>
<div class="r" style="left:850.9px;top:995.4px;width:119.0px;height:30.2px;background:#6a2125;"></div>
<div class="r" style="left:1088.9px;top:995.4px;width:75.1px;height:30.2px;background:#7c2222;"></div>
<div class="t " style="left:503.3px;top:1005.5px;font-size:11.0px;color:#f4f4f4;font-weight:700;-webkit-text-stroke:0;">LP 7</div>
<div class="t ns" style="right:1328.3px;top:1004.4px;font-size:12.3px;color:#eeeeee;">-0.151</div>
<div class="t ns" style="right:1209.9px;top:1004.4px;font-size:12.3px;color:#eeeeee;">-0.002</div>
<div class="t ns" style="right:1090.9px;top:1004.4px;font-size:12.3px;color:#eeeeee;">0.001</div>
<div class="t ns" style="right:971.9px;top:1004.4px;font-size:12.3px;color:#eeeeee;">0</div>
<div class="r" style="left:494.8px;top:1025.0px;width:669.2px;height:30.2px;background:#141823;"></div>
<div class="r" style="left:613.5px;top:1025.0px;width:119.0px;height:30.2px;background:#1a2b19;"></div>
<div class="r" style="left:732.5px;top:1025.0px;width:118.4px;height:30.2px;background:#172717;"></div>
<div class="t " style="left:503.3px;top:1035.1px;font-size:11.0px;color:#f4f4f4;font-weight:700;-webkit-text-stroke:0;">LP 8</div>
<div class="t ns" style="right:1328.3px;top:1034.0px;font-size:12.3px;color:#eeeeee;">-0.045</div>
<div class="t ns" style="right:1209.9px;top:1034.0px;font-size:12.3px;color:#eeeeee;">-0.001</div>
<div class="t ns" style="right:1090.9px;top:1034.0px;font-size:12.3px;color:#eeeeee;">0</div>
<div class="t ns" style="right:971.9px;top:1034.0px;font-size:12.3px;color:#eeeeee;">0</div>
<div class="r" style="left:494.5px;top:1120.2px;width:471.5px;height:7.4px;background:#2c303a;"></div>
<div class="t " style="left:1212.8px;top:761.0px;font-size:13.5px;color:#c5c7cc;">Spreads Chart</div>
<svg style="left:1190px;top:790px" width="680" height="290" viewBox="1190 790 680 290">
<line x1="1282.8" y1="1039.3" x2="1848.5" y2="1039.3" stroke="#2b303b" stroke-width="1"/>
<line x1="1282.8" y1="1009.6" x2="1848.5" y2="1009.6" stroke="#2b303b" stroke-width="1"/>
<line x1="1282.8" y1="979.9" x2="1848.5" y2="979.9" stroke="#2b303b" stroke-width="1"/>
<line x1="1282.8" y1="950.2" x2="1848.5" y2="950.2" stroke="#2b303b" stroke-width="1"/>
<line x1="1282.8" y1="920.5" x2="1848.5" y2="920.5" stroke="#2b303b" stroke-width="1"/>
<line x1="1282.8" y1="890.9" x2="1848.5" y2="890.9" stroke="#2b303b" stroke-width="1"/>
<line x1="1282.8" y1="861.2" x2="1848.5" y2="861.2" stroke="#2b303b" stroke-width="1"/>
<line x1="1282.8" y1="831.5" x2="1848.5" y2="831.5" stroke="#2b303b" stroke-width="1"/>
<line x1="1282.8" y1="801.8" x2="1848.5" y2="801.8" stroke="#2b303b" stroke-width="1"/>
<line x1="1282.8" y1="801.8" x2="1282.8" y2="1039.3" stroke="#2b303b" stroke-width="1"/>
<line x1="1316.4" y1="801.8" x2="1316.4" y2="1039.3" stroke="#2b303b" stroke-width="1"/>
<line x1="1350.0" y1="801.8" x2="1350.0" y2="1039.3" stroke="#2b303b" stroke-width="1"/>
<line x1="1383.6" y1="801.8" x2="1383.6" y2="1039.3" stroke="#2b303b" stroke-width="1"/>
<line x1="1417.2" y1="801.8" x2="1417.2" y2="1039.3" stroke="#2b303b" stroke-width="1"/>
<line x1="1450.8" y1="801.8" x2="1450.8" y2="1039.3" stroke="#2b303b" stroke-width="1"/>
<line x1="1484.5" y1="801.8" x2="1484.5" y2="1039.3" stroke="#2b303b" stroke-width="1"/>
<line x1="1518.1" y1="801.8" x2="1518.1" y2="1039.3" stroke="#2b303b" stroke-width="1"/>
<line x1="1551.7" y1="801.8" x2="1551.7" y2="1039.3" stroke="#2b303b" stroke-width="1"/>
<line x1="1585.3" y1="801.8" x2="1585.3" y2="1039.3" stroke="#2b303b" stroke-width="1"/>
<line x1="1618.9" y1="801.8" x2="1618.9" y2="1039.3" stroke="#2b303b" stroke-width="1"/>
<line x1="1652.5" y1="801.8" x2="1652.5" y2="1039.3" stroke="#2b303b" stroke-width="1"/>
<line x1="1686.1" y1="801.8" x2="1686.1" y2="1039.3" stroke="#2b303b" stroke-width="1"/>
<line x1="1719.7" y1="801.8" x2="1719.7" y2="1039.3" stroke="#2b303b" stroke-width="1"/>
<line x1="1753.3" y1="801.8" x2="1753.3" y2="1039.3" stroke="#2b303b" stroke-width="1"/>
<line x1="1786.9" y1="801.8" x2="1786.9" y2="1039.3" stroke="#2b303b" stroke-width="1"/>
<line x1="1820.6" y1="801.8" x2="1820.6" y2="1039.3" stroke="#2b303b" stroke-width="1"/>
<polyline points="1282.8,1003.7 1285.6,1003.7 1285.6,1003.7 1288.4,1003.7 1288.4,1003.7 1291.2,1003.7 1291.2,1003.7 1294.0,1003.7 1294.0,1003.7 1296.8,1003.7 1296.8,1003.7 1299.6,1003.7 1299.6,1015.5 1302.4,1015.5 1302.4,1003.7 1305.2,1003.7 1305.2,1003.7 1308.0,1003.7 1308.0,1003.7 1310.8,1003.7 1310.8,1003.7 1313.6,1003.7 1313.6,1003.7 1316.4,1003.7 1316.4,1015.5 1319.2,1015.5 1319.2,1015.5 1322.0,1015.5 1322.0,1003.7 1324.8,1003.7 1324.8,1015.5 1327.6,1015.5 1327.6,1015.5 1330.4,1015.5 1330.4,1015.5 1333.2,1015.5 1333.2,1015.5 1336.0,1015.5 1336.0,1015.5 1338.8,1015.5 1338.8,1015.5 1341.6,1015.5 1341.6,1015.5 1344.4,1015.5 1344.4,1015.5 1347.2,1015.5 1347.2,1015.5 1350.0,1015.5 1350.0,1015.5 1352.8,1015.5 1352.8,1003.7 1355.6,1003.7 1355.6,1015.5 1358.4,1015.5 1358.4,1015.5 1361.2,1015.5 1361.2,1015.5 1364.0,1015.5 1364.0,1015.5 1366.8,1015.5 1366.8,1015.5 1369.6,1015.5 1369.6,1015.5 1372.4,1015.5 1372.4,1003.7 1375.2,1003.7 1375.2,1003.7 1378.0,1003.7 1378.0,1003.7 1380.8,1003.7 1380.8,1015.5 1383.6,1015.5 1383.6,1015.5 1386.4,1015.5 1386.4,1003.7 1389.2,1003.7 1389.2,1003.7 1392.0,1003.7 1392.0,1003.7 1394.8,1003.7 1394.8,1015.5 1397.6,1015.5 1397.6,1015.5 1400.4,1015.5 1400.4,1015.5 1403.2,1015.5 1403.2,1015.5 1406.0,1015.5 1406.0,1015.5 1408.8,1015.5 1408.8,1015.5 1411.6,1015.5 1411.6,1003.7 1414.4,1003.7 1414.4,1003.7 1417.2,1003.7 1417.2,1003.7 1420.0,1003.7 1420.0,1003.7 1422.8,1003.7 1422.8,1015.5 1425.6,1015.5 1425.6,1015.5 1428.4,1015.5 1428.4,1003.7 1431.2,1003.7 1431.2,1015.5 1434.0,1015.5 1434.0,1015.5 1436.8,1015.5 1436.8,1003.7 1439.6,1003.7 1439.6,1003.7 1442.4,1003.7 1442.4,1003.7 1445.2,1003.7 1445.2,1015.5 1448.0,1015.5 1448.0,1015.5 1450.8,1015.5 1450.8,1015.5 1453.6,1015.5 1453.6,1015.5 1456.4,1015.5 1456.4,1015.5 1459.2,1015.5 1459.2,1015.5 1462.0,1015.5 1462.0,1003.7 1464.8,1003.7 1464.8,1003.7 1467.6,1003.7 1467.6,1003.7 1470.4,1003.7 1470.4,1003.7 1473.2,1003.7 1473.2,1003.7 1476.0,1003.7 1476.0,1003.7 1478.8,1003.7 1478.8,1003.7 1481.6,1003.7 1481.6,1003.7 1484.4,1003.7 1484.4,1015.5 1487.2,1015.5 1487.2,1015.5 1490.0,1015.5 1490.0,1003.7 1492.8,1003.7 1492.8,1015.5 1495.6,1015.5 1495.6,1015.5 1498.4,1015.5 1498.4,1003.7 1501.2,1003.7 1501.2,1003.7 1504.0,1003.7 1504.0,1003.7 1506.8,1003.7 1506.8,1015.5 1509.6,1015.5 1509.6,1003.7 1512.4,1003.7 1512.4,991.8 1515.2,991.8 1515.2,991.8 1518.0,991.8 1518.0,991.8 1520.8,991.8 1520.8,1003.7 1523.6,1003.7 1523.6,1003.7 1526.4,1003.7 1526.4,1003.7 1529.2,1003.7 1529.2,991.8 1532.0,991.8 1532.0,991.8 1534.8,991.8 1534.8,1015.5 1537.6,1015.5 1537.6,1015.5 1540.4,1015.5 1540.4,1015.5 1543.2,1015.5 1543.2,1015.5 1546.0,1015.5 1546.0,1015.5 1548.8,1015.5 1548.8,1015.5 1551.6,1015.5 1551.6,1015.5 1554.4,1015.5 1554.4,1015.5 1557.2,1015.5 1557.2,1015.5 1560.0,1015.5 1560.0,1015.5 1562.8,1015.5 1562.8,1015.5 1565.7,1015.5 1565.7,1003.7 1568.5,1003.7 1568.5,1003.7 1571.3,1003.7 1571.3,1015.5 1574.1,1015.5 1574.1,1003.7 1576.9,1003.7 1576.9,1003.7 1579.7,1003.7 1579.7,1003.7 1582.5,1003.7 1582.5,1015.5 1585.3,1015.5 1585.3,1015.5 1588.1,1015.5 1588.1,1003.7 1590.9,1003.7 1590.9,1015.5 1593.7,1015.5 1593.7,1015.5 1596.5,1015.5 1596.5,1015.5 1599.3,1015.5 1599.3,1003.7 1602.1,1003.7 1602.1,1015.5 1604.9,1015.5 1604.9,1015.5 1607.7,1015.5 1607.7,1015.5 1610.5,1015.5 1610.5,1015.5 1613.3,1015.5 1613.3,1015.5 1616.1,1015.5 1616.1,1015.5 1618.9,1015.5 1618.9,1003.7 1621.7,1003.7 1621.7,1003.7 1624.5,1003.7 1624.5,1015.5 1627.3,1015.5 1627.3,1015.5 1630.1,1015.5 1630.1,1015.5 1632.9,1015.5 1632.9,1015.5 1635.7,1015.5 1635.7,1003.7 1638.5,1003.7 1638.5,1003.7 1641.3,1003.7 1641.3,1003.7 1644.1,1003.7 1644.1,1015.5 1646.9,1015.5 1646.9,1015.5 1649.7,1015.5 1649.7,1003.7 1652.5,1003.7 1652.5,1015.5 1655.3,1015.5 1655.3,1015.5 1658.1,1015.5 1658.1,1015.5 1660.9,1015.5 1660.9,1015.5 1663.7,1015.5 1663.7,1015.5 1666.5,1015.5 1666.5,1015.5 1669.3,1015.5 1669.3,1015.5 1672.1,1015.5 1672.1,1015.5 1674.9,1015.5 1674.9,1015.5 1677.7,1015.5 1677.7,1015.5 1680.5,1015.5 1680.5,1015.5 1683.3,1015.5 1683.3,1003.7 1686.1,1003.7 1686.1,1003.7 1688.9,1003.7 1688.9,1003.7 1691.7,1003.7 1691.7,1003.7 1694.5,1003.7 1694.5,1003.7 1697.3,1003.7 1697.3,1003.7 1700.1,1003.7 1700.1,1015.5 1702.9,1015.5 1702.9,1015.5 1705.7,1015.5 1705.7,1015.5 1708.5,1015.5 1708.5,1015.5 1711.3,1015.5 1711.3,1015.5 1714.1,1015.5 1714.1,1015.5 1716.9,1015.5 1716.9,1015.5 1719.7,1015.5 1719.7,1015.5 1722.5,1015.5 1722.5,1015.5 1725.3,1015.5 1725.3,1015.5 1728.1,1015.5 1728.1,1015.5 1730.9,1015.5 1730.9,1015.5 1733.7,1015.5 1733.7,1015.5 1736.5,1015.5 1736.5,1015.5 1739.3,1015.5 1739.3,1015.5 1742.1,1015.5 1742.1,1015.5 1744.9,1015.5 1744.9,1015.5 1747.7,1015.5 1747.7,1003.7 1750.5,1003.7 1750.5,1003.7 1753.3,1003.7 1753.3,1015.5 1756.1,1015.5 1756.1,1015.5 1758.9,1015.5 1758.9,1015.5 1761.7,1015.5 1761.7,1015.5 1764.5,1015.5 1764.5,1015.5 1767.3,1015.5 1767.3,1015.5 1770.1,1015.5 1770.1,1015.5 1772.9,1015.5 1772.9,1015.5 1775.7,1015.5 1775.7,1015.5 1778.5,1015.5 1778.5,1015.5 1781.3,1015.5 1781.3,1015.5 1784.1,1015.5 1784.1,1015.5 1786.9,1015.5 1786.9,1015.5 1789.7,1015.5 1789.7,1015.5 1792.5,1015.5 1792.5,1015.5 1795.3,1015.5 1795.3,1003.7 1798.1,1003.7 1798.1,1015.5 1800.9,1015.5 1800.9,1003.7 1803.7,1003.7 1803.7,1015.5 1806.5,1015.5 1806.5,1003.7 1809.3,1003.7 1809.3,1003.7 1812.1,1003.7 1812.1,1015.5 1814.9,1015.5 1814.9,1003.7 1817.7,1003.7 1817.7,1003.7 1820.5,1003.7 1820.5,1003.7 1823.3,1003.7 1823.3,1015.5 1826.1,1015.5 1826.1,1015.5 1828.9,1015.5 1828.9,1015.5 1831.7,1015.5 1831.7,1015.5 1834.5,1015.5 1834.5,1015.5 1837.3,1015.5 1837.3,1015.5 1840.1,1015.5 1840.1,1015.5 1842.9,1015.5 1842.9,1003.7 1845.7,1003.7 1845.7,1015.5 1848.5,1015.5" fill="none" stroke="#4654c4" stroke-width="1.25" stroke-linejoin="miter"/>
<polyline points="1282.8,991.8 1285.6,991.8 1285.6,991.8 1288.4,991.8 1288.4,991.8 1291.2,991.8 1291.2,991.8 1294.0,991.8 1294.0,991.8 1296.8,991.8 1296.8,991.8 1299.6,991.8 1299.6,991.8 1302.4,991.8 1302.4,979.9 1305.2,979.9 1305.2,991.8 1308.0,991.8 1308.0,991.8 1310.8,991.8 1310.8,991.8 1313.6,991.8 1313.6,991.8 1316.4,991.8 1316.4,979.9 1319.2,979.9 1319.2,979.9 1322.0,979.9 1322.0,991.8 1324.8,991.8 1324.8,979.9 1327.6,979.9 1327.6,991.8 1330.4,991.8 1330.4,991.8 1333.2,991.8 1333.2,991.8 1336.0,991.8 1336.0,968.0 1338.8,968.0 1338.8,968.0 1341.6,968.0 1341.6,956.2 1344.4,956.2 1344.4,956.2 1347.2,956.2 1347.2,968.0 1350.0,968.0 1350.0,979.9 1352.8,979.9 1352.8,968.0 1355.6,968.0 1355.6,979.9 1358.4,979.9 1358.4,979.9 1361.2,979.9 1361.2,979.9 1364.0,979.9 1364.0,979.9 1366.8,979.9 1366.8,968.0 1369.6,968.0 1369.6,968.0 1372.4,968.0 1372.4,956.2 1375.2,956.2 1375.2,968.0 1378.0,968.0 1378.0,979.9 1380.8,979.9 1380.8,979.9 1383.6,979.9 1383.6,968.0 1386.4,968.0 1386.4,979.9 1389.2,979.9 1389.2,991.8 1392.0,991.8 1392.0,991.8 1394.8,991.8 1394.8,979.9 1397.6,979.9 1397.6,979.9 1400.4,979.9 1400.4,979.9 1403.2,979.9 1403.2,979.9 1406.0,979.9 1406.0,979.9 1408.8,979.9 1408.8,968.0 1411.6,968.0 1411.6,979.9 1414.4,979.9 1414.4,979.9 1417.2,979.9 1417.2,968.0 1420.0,968.0 1420.0,968.0 1422.8,968.0 1422.8,991.8 1425.6,991.8 1425.6,991.8 1428.4,991.8 1428.4,991.8 1431.2,991.8 1431.2,991.8 1434.0,991.8 1434.0,991.8 1436.8,991.8 1436.8,991.8 1439.6,991.8 1439.6,979.9 1442.4,979.9 1442.4,979.9 1445.2,979.9 1445.2,979.9 1448.0,979.9 1448.0,979.9 1450.8,979.9 1450.8,968.0 1453.6,968.0 1453.6,968.0 1456.4,968.0 1456.4,979.9 1459.2,979.9 1459.2,968.0 1462.0,968.0 1462.0,956.2 1464.8,956.2 1464.8,956.2 1467.6,956.2 1467.6,956.2 1470.4,956.2 1470.4,956.2 1473.2,956.2 1473.2,968.0 1476.0,968.0 1476.0,979.9 1478.8,979.9 1478.8,968.0 1481.6,968.0 1481.6,979.9 1484.4,979.9 1484.4,979.9 1487.2,979.9 1487.2,991.8 1490.0,991.8 1490.0,991.8 1492.8,991.8 1492.8,991.8 1495.6,991.8 1495.6,991.8 1498.4,991.8 1498.4,979.9 1501.2,979.9 1501.2,968.0 1504.0,968.0 1504.0,979.9 1506.8,979.9 1506.8,968.0 1509.6,968.0 1509.6,979.9 1512.4,979.9 1512.4,968.0 1515.2,968.0 1515.2,968.0 1518.0,968.0 1518.0,944.3 1520.8,944.3 1520.8,932.4 1523.6,932.4 1523.6,932.4 1526.4,932.4 1526.4,932.4 1529.2,932.4 1529.2,932.4 1532.0,932.4 1532.0,944.3 1534.8,944.3 1534.8,944.3 1537.6,944.3 1537.6,944.3 1540.4,944.3 1540.4,956.2 1543.2,956.2 1543.2,944.3 1546.0,944.3 1546.0,944.3 1548.8,944.3 1548.8,956.2 1551.6,956.2 1551.6,968.0 1554.4,968.0 1554.4,956.2 1557.2,956.2 1557.2,956.2 1560.0,956.2 1560.0,956.2 1562.8,956.2 1562.8,968.0 1565.7,968.0 1565.7,979.9 1568.5,979.9 1568.5,968.0 1571.3,968.0 1571.3,956.2 1574.1,956.2 1574.1,956.2 1576.9,956.2 1576.9,932.4 1579.7,932.4 1579.7,944.3 1582.5,944.3 1582.5,944.3 1585.3,944.3 1585.3,944.3 1588.1,944.3 1588.1,944.3 1590.9,944.3 1590.9,956.2 1593.7,956.2 1593.7,968.0 1596.5,968.0 1596.5,968.0 1599.3,968.0 1599.3,991.8 1602.1,991.8 1602.1,991.8 1604.9,991.8 1604.9,979.9 1607.7,979.9 1607.7,979.9 1610.5,979.9 1610.5,968.0 1613.3,968.0 1613.3,979.9 1616.1,979.9 1616.1,991.8 1618.9,991.8 1618.9,991.8 1621.7,991.8 1621.7,991.8 1624.5,991.8 1624.5,991.8 1627.3,991.8 1627.3,968.0 1630.1,968.0 1630.1,956.2 1632.9,956.2 1632.9,956.2 1635.7,956.2 1635.7,956.2 1638.5,956.2 1638.5,968.0 1641.3,968.0 1641.3,956.2 1644.1,956.2 1644.1,932.4 1646.9,932.4 1646.9,944.3 1649.7,944.3 1649.7,944.3 1652.5,944.3 1652.5,944.3 1655.3,944.3 1655.3,944.3 1658.1,944.3 1658.1,932.4 1660.9,932.4 1660.9,944.3 1663.7,944.3 1663.7,944.3 1666.5,944.3 1666.5,956.2 1669.3,956.2 1669.3,956.2 1672.1,956.2 1672.1,944.3 1674.9,944.3 1674.9,944.3 1677.7,944.3 1677.7,956.2 1680.5,956.2 1680.5,968.0 1683.3,968.0 1683.3,968.0 1686.1,968.0 1686.1,944.3 1688.9,944.3 1688.9,944.3 1691.7,944.3 1691.7,956.2 1694.5,956.2 1694.5,968.0 1697.3,968.0 1697.3,968.0 1700.1,968.0 1700.1,968.0 1702.9,968.0 1702.9,979.9 1705.7,979.9 1705.7,956.2 1708.5,956.2 1708.5,956.2 1711.3,956.2 1711.3,956.2 1714.1,956.2 1714.1,968.0 1716.9,968.0 1716.9,979.9 1719.7,979.9 1719.7,968.0 1722.5,968.0 1722.5,968.0 1725.3,968.0 1725.3,956.2 1728.1,956.2 1728.1,932.4 1730.9,932.4 1730.9,944.3 1733.7,944.3 1733.7,944.3 1736.5,944.3 1736.5,944.3 1739.3,944.3 1739.3,956.2 1742.1,956.2 1742.1,956.2 1744.9,956.2 1744.9,932.4 1747.7,932.4 1747.7,932.4 1750.5,932.4 1750.5,932.4 1753.3,932.4 1753.3,932.4 1756.1,932.4 1756.1,932.4 1758.9,932.4 1758.9,932.4 1761.7,932.4 1761.7,944.3 1764.5,944.3 1764.5,956.2 1767.3,956.2 1767.3,956.2 1770.1,956.2 1770.1,956.2 1772.9,956.2 1772.9,968.0 1775.7,968.0 1775.7,979.9 1778.5,979.9 1778.5,991.8 1781.3,991.8 1781.3,991.8 1784.1,991.8 1784.1,979.9 1786.9,979.9 1786.9,979.9 1789.7,979.9 1789.7,979.9 1792.5,979.9 1792.5,979.9 1795.3,979.9 1795.3,968.0 1798.1,968.0 1798.1,968.0 1800.9,968.0 1800.9,979.9 1803.7,979.9 1803.7,968.0 1806.5,968.0 1806.5,979.9 1809.3,979.9 1809.3,968.0 1812.1,968.0 1812.1,968.0 1814.9,968.0 1814.9,944.3 1817.7,944.3 1817.7,956.2 1820.5,956.2 1820.5,956.2 1823.3,956.2 1823.3,956.2 1826.1,956.2 1826.1,956.2 1828.9,956.2 1828.9,944.3 1831.7,944.3 1831.7,944.3 1834.5,944.3 1834.5,944.3 1837.3,944.3 1837.3,932.4 1840.1,932.4 1840.1,956.2 1842.9,956.2 1842.9,956.2 1845.7,956.2 1845.7,968.0 1848.5,968.0" fill="none" stroke="#3b8b7c" stroke-width="1.25" stroke-linejoin="miter"/>
<polyline points="1282.8,837.4 1285.6,837.4 1285.6,837.4 1288.4,837.4 1288.4,968.0 1291.2,968.0 1291.2,956.2 1294.0,956.2 1294.0,968.0 1296.8,968.0 1296.8,968.0 1299.6,968.0 1299.6,968.0 1302.4,968.0 1302.4,968.0 1305.2,968.0 1305.2,979.9 1308.0,979.9 1308.0,979.9 1310.8,979.9 1310.8,968.0 1313.6,968.0 1313.6,956.2 1316.4,956.2 1316.4,968.0 1319.2,968.0 1319.2,968.0 1322.0,968.0 1322.0,968.0 1324.8,968.0 1324.8,979.9 1327.6,979.9 1327.6,968.0 1330.4,968.0 1330.4,968.0 1333.2,968.0 1333.2,968.0 1336.0,968.0 1336.0,979.9 1338.8,979.9 1338.8,991.8 1341.6,991.8 1341.6,991.8 1344.4,991.8 1344.4,979.9 1347.2,979.9 1347.2,991.8 1350.0,991.8 1350.0,979.9 1352.8,979.9 1352.8,979.9 1355.6,979.9 1355.6,956.2 1358.4,956.2 1358.4,956.2 1361.2,956.2 1361.2,956.2 1364.0,956.2 1364.0,956.2 1366.8,956.2 1366.8,956.2 1369.6,956.2 1369.6,932.4 1372.4,932.4 1372.4,932.4 1375.2,932.4 1375.2,944.3 1378.0,944.3 1378.0,956.2 1380.8,956.2 1380.8,968.0 1383.6,968.0 1383.6,979.9 1386.4,979.9 1386.4,979.9 1389.2,979.9 1389.2,968.0 1392.0,968.0 1392.0,979.9 1394.8,979.9 1394.8,979.9 1397.6,979.9 1397.6,968.0 1400.4,968.0 1400.4,968.0 1403.2,968.0 1403.2,979.9 1406.0,979.9 1406.0,968.0 1408.8,968.0 1408.8,979.9 1411.6,979.9 1411.6,956.2 1414.4,956.2 1414.4,968.0 1417.2,968.0 1417.2,956.2 1420.0,956.2 1420.0,968.0 1422.8,968.0 1422.8,979.9 1425.6,979.9 1425.6,979.9 1428.4,979.9 1428.4,968.0 1431.2,968.0 1431.2,979.9 1434.0,979.9 1434.0,968.0 1436.8,968.0 1436.8,979.9 1439.6,979.9 1439.6,979.9 1442.4,979.9 1442.4,968.0 1445.2,968.0 1445.2,979.9 1448.0,979.9 1448.0,991.8 1450.8,991.8 1450.8,1003.7 1453.6,1003.7 1453.6,991.8 1456.4,991.8 1456.4,979.9 1459.2,979.9 1459.2,979.9 1462.0,979.9 1462.0,956.2 1464.8,956.2 1464.8,968.0 1467.6,968.0 1467.6,956.2 1470.4,956.2 1470.4,944.3 1473.2,944.3 1473.2,932.4 1476.0,932.4 1476.0,944.3 1478.8,944.3 1478.8,956.2 1481.6,956.2 1481.6,956.2 1484.4,956.2 1484.4,956.2 1487.2,956.2 1487.2,968.0 1490.0,968.0 1490.0,979.9 1492.8,979.9 1492.8,968.0 1495.6,968.0 1495.6,979.9 1498.4,979.9 1498.4,968.0 1501.2,968.0 1501.2,968.0 1504.0,968.0 1504.0,979.9 1506.8,979.9 1506.8,968.0 1509.6,968.0 1509.6,944.3 1512.4,944.3 1512.4,932.4 1515.2,932.4 1515.2,944.3 1518.0,944.3 1518.0,944.3 1520.8,944.3 1520.8,932.4 1523.6,932.4 1523.6,944.3 1526.4,944.3 1526.4,944.3 1529.2,944.3 1529.2,944.3 1532.0,944.3 1532.0,944.3 1534.8,944.3 1534.8,932.4 1537.6,932.4 1537.6,932.4 1540.4,932.4 1540.4,944.3 1543.2,944.3 1543.2,956.2 1546.0,956.2 1546.0,956.2 1548.8,956.2 1548.8,968.0 1551.6,968.0 1551.6,979.9 1554.4,979.9 1554.4,968.0 1557.2,968.0 1557.2,968.0 1560.0,968.0 1560.0,968.0 1562.8,968.0 1562.8,968.0 1565.7,968.0 1565.7,968.0 1568.5,968.0 1568.5,979.9 1571.3,979.9 1571.3,968.0 1574.1,968.0 1574.1,979.9 1576.9,979.9 1576.9,991.8 1579.7,991.8 1579.7,991.8 1582.5,991.8 1582.5,979.9 1585.3,979.9 1585.3,968.0 1588.1,968.0 1588.1,979.9 1590.9,979.9 1590.9,979.9 1593.7,979.9 1593.7,968.0 1596.5,968.0 1596.5,979.9 1599.3,979.9 1599.3,968.0 1602.1,968.0 1602.1,968.0 1604.9,968.0 1604.9,968.0 1607.7,968.0 1607.7,968.0 1610.5,968.0 1610.5,979.9 1613.3,979.9 1613.3,979.9 1616.1,979.9 1616.1,968.0 1618.9,968.0 1618.9,979.9 1621.7,979.9 1621.7,991.8 1624.5,991.8 1624.5,968.0 1627.3,968.0 1627.3,968.0 1630.1,968.0 1630.1,956.2 1632.9,956.2 1632.9,968.0 1635.7,968.0 1635.7,979.9 1638.5,979.9 1638.5,968.0 1641.3,968.0 1641.3,968.0 1644.1,968.0 1644.1,968.0 1646.9,968.0 1646.9,979.9 1649.7,979.9 1649.7,991.8 1652.5,991.8 1652.5,991.8 1655.3,991.8 1655.3,968.0 1658.1,968.0 1658.1,979.9 1660.9,979.9 1660.9,968.0 1663.7,968.0 1663.7,968.0 1666.5,968.0 1666.5,979.9 1669.3,979.9 1669.3,979.9 1672.1,979.9 1672.1,968.0 1674.9,968.0 1674.9,979.9 1677.7,979.9 1677.7,979.9 1680.5,979.9 1680.5,979.9 1683.3,979.9 1683.3,968.0 1686.1,968.0 1686.1,968.0 1688.9,968.0 1688.9,956.2 1691.7,956.2 1691.7,944.3 1694.5,944.3 1694.5,956.2 1697.3,956.2 1697.3,968.0 1700.1,968.0 1700.1,968.0 1702.9,968.0 1702.9,979.9 1705.7,979.9 1705.7,979.9 1708.5,979.9 1708.5,968.0 1711.3,968.0 1711.3,968.0 1714.1,968.0 1714.1,968.0 1716.9,968.0 1716.9,956.2 1719.7,956.2 1719.7,968.0 1722.5,968.0 1722.5,968.0 1725.3,968.0 1725.3,979.9 1728.1,979.9 1728.1,968.0 1730.9,968.0 1730.9,979.9 1733.7,979.9 1733.7,991.8 1736.5,991.8 1736.5,1003.7 1739.3,1003.7 1739.3,991.8 1742.1,991.8 1742.1,991.8 1744.9,991.8 1744.9,991.8 1747.7,991.8 1747.7,991.8 1750.5,991.8 1750.5,991.8 1753.3,991.8 1753.3,991.8 1756.1,991.8 1756.1,1003.7 1758.9,1003.7 1758.9,991.8 1761.7,991.8 1761.7,991.8 1764.5,991.8 1764.5,979.9 1767.3,979.9 1767.3,968.0 1770.1,968.0 1770.1,968.0 1772.9,968.0 1772.9,968.0 1775.7,968.0 1775.7,968.0 1778.5,968.0 1778.5,979.9 1781.3,979.9 1781.3,991.8 1784.1,991.8 1784.1,1003.7 1786.9,1003.7 1786.9,884.9 1789.7,884.9 1789.7,884.9 1792.5,884.9 1792.5,979.9 1795.3,979.9 1795.3,979.9 1798.1,979.9 1798.1,979.9 1800.9,979.9 1800.9,968.0 1803.7,968.0 1803.7,979.9 1806.5,979.9 1806.5,968.0 1809.3,968.0 1809.3,968.0 1812.1,968.0 1812.1,968.0 1814.9,968.0 1814.9,979.9 1817.7,979.9 1817.7,968.0 1820.5,968.0 1820.5,968.0 1823.3,968.0 1823.3,968.0 1826.1,968.0 1826.1,968.0 1828.9,968.0 1828.9,979.9 1831.7,979.9 1831.7,979.9 1834.5,979.9 1834.5,968.0 1837.3,968.0 1837.3,979.9 1840.1,979.9 1840.1,968.0 1842.9,968.0 1842.9,991.8 1845.7,991.8 1845.7,979.9 1848.5,979.9" fill="none" stroke="#9440c4" stroke-width="1.25" stroke-linejoin="miter"/>
<polyline points="1282.8,944.3 1285.6,944.3 1285.6,968.0 1288.4,968.0 1288.4,968.0 1291.2,968.0 1291.2,968.0 1294.0,968.0 1294.0,991.8 1296.8,991.8 1296.8,991.8 1299.6,991.8 1299.6,991.8 1302.4,991.8 1302.4,979.9 1305.2,979.9 1305.2,968.0 1308.0,968.0 1308.0,968.0 1310.8,968.0 1310.8,968.0 1313.6,968.0 1313.6,956.2 1316.4,956.2 1316.4,968.0 1319.2,968.0 1319.2,979.9 1322.0,979.9 1322.0,979.9 1324.8,979.9 1324.8,968.0 1327.6,968.0 1327.6,979.9 1330.4,979.9 1330.4,968.0 1333.2,968.0 1333.2,979.9 1336.0,979.9 1336.0,968.0 1338.8,968.0 1338.8,979.9 1341.6,979.9 1341.6,968.0 1344.4,968.0 1344.4,968.0 1347.2,968.0 1347.2,968.0 1350.0,968.0 1350.0,979.9 1352.8,979.9 1352.8,979.9 1355.6,979.9 1355.6,979.9 1358.4,979.9 1358.4,979.9 1361.2,979.9 1361.2,968.0 1364.0,968.0 1364.0,968.0 1366.8,968.0 1366.8,968.0 1369.6,968.0 1369.6,991.8 1372.4,991.8 1372.4,979.9 1375.2,979.9 1375.2,968.0 1378.0,968.0 1378.0,979.9 1380.8,979.9 1380.8,968.0 1383.6,968.0 1383.6,979.9 1386.4,979.9 1386.4,979.9 1389.2,979.9 1389.2,979.9 1392.0,979.9 1392.0,979.9 1394.8,979.9 1394.8,968.0 1397.6,968.0 1397.6,968.0 1400.4,968.0 1400.4,956.2 1403.2,956.2 1403.2,956.2 1406.0,956.2 1406.0,956.2 1408.8,956.2 1408.8,968.0 1411.6,968.0 1411.6,968.0 1414.4,968.0 1414.4,956.2 1417.2,956.2 1417.2,968.0 1420.0,968.0 1420.0,979.9 1422.8,979.9 1422.8,979.9 1425.6,979.9 1425.6,979.9 1428.4,979.9 1428.4,968.0 1431.2,968.0 1431.2,979.9 1434.0,979.9 1434.0,979.9 1436.8,979.9 1436.8,979.9 1439.6,979.9 1439.6,968.0 1442.4,968.0 1442.4,979.9 1445.2,979.9 1445.2,968.0 1448.0,968.0 1448.0,968.0 1450.8,968.0 1450.8,956.2 1453.6,956.2 1453.6,968.0 1456.4,968.0 1456.4,979.9 1459.2,979.9 1459.2,968.0 1462.0,968.0 1462.0,968.0 1464.8,968.0 1464.8,968.0 1467.6,968.0 1467.6,979.9 1470.4,979.9 1470.4,979.9 1473.2,979.9 1473.2,979.9 1476.0,979.9 1476.0,968.0 1478.8,968.0 1478.8,979.9 1481.6,979.9 1481.6,979.9 1484.4,979.9 1484.4,968.0 1487.2,968.0 1487.2,979.9 1490.0,979.9 1490.0,968.0 1492.8,968.0 1492.8,968.0 1495.6,968.0 1495.6,968.0 1498.4,968.0 1498.4,979.9 1501.2,979.9 1501.2,968.0 1504.0,968.0 1504.0,979.9 1506.8,979.9 1506.8,968.0 1509.6,968.0 1509.6,979.9 1512.4,979.9 1512.4,968.0 1515.2,968.0 1515.2,968.0 1518.0,968.0 1518.0,979.9 1520.8,979.9 1520.8,979.9 1523.6,979.9 1523.6,968.0 1526.4,968.0 1526.4,968.0 1529.2,968.0 1529.2,968.0 1532.0,968.0 1532.0,979.9 1534.8,979.9 1534.8,968.0 1537.6,968.0 1537.6,979.9 1540.4,979.9 1540.4,979.9 1543.2,979.9 1543.2,991.8 1546.0,991.8 1546.0,991.8 1548.8,991.8 1548.8,979.9 1551.6,979.9 1551.6,979.9 1554.4,979.9 1554.4,991.8 1557.2,991.8 1557.2,991.8 1560.0,991.8 1560.0,991.8 1562.8,991.8 1562.8,991.8 1565.7,991.8 1565.7,979.9 1568.5,979.9 1568.5,979.9 1571.3,979.9 1571.3,991.8 1574.1,991.8 1574.1,991.8 1576.9,991.8 1576.9,979.9 1579.7,979.9 1579.7,991.8 1582.5,991.8 1582.5,991.8 1585.3,991.8 1585.3,991.8 1588.1,991.8 1588.1,991.8 1590.9,991.8 1590.9,979.9 1593.7,979.9 1593.7,968.0 1596.5,968.0 1596.5,968.0 1599.3,968.0 1599.3,979.9 1602.1,979.9 1602.1,991.8 1604.9,991.8 1604.9,991.8 1607.7,991.8 1607.7,979.9 1610.5,979.9 1610.5,956.2 1613.3,956.2 1613.3,968.0 1616.1,968.0 1616.1,968.0 1618.9,968.0 1618.9,956.2 1621.7,956.2 1621.7,968.0 1624.5,968.0 1624.5,979.9 1627.3,979.9 1627.3,968.0 1630.1,968.0 1630.1,956.2 1632.9,956.2 1632.9,968.0 1635.7,968.0 1635.7,956.2 1638.5,956.2 1638.5,944.3 1641.3,944.3 1641.3,932.4 1644.1,932.4 1644.1,932.4 1646.9,932.4 1646.9,932.4 1649.7,932.4 1649.7,932.4 1652.5,932.4 1652.5,944.3 1655.3,944.3 1655.3,956.2 1658.1,956.2 1658.1,968.0 1660.9,968.0 1660.9,956.2 1663.7,956.2 1663.7,979.9 1666.5,979.9 1666.5,968.0 1669.3,968.0 1669.3,968.0 1672.1,968.0 1672.1,968.0 1674.9,968.0 1674.9,968.0 1677.7,968.0 1677.7,991.8 1680.5,991.8 1680.5,979.9 1683.3,979.9 1683.3,979.9 1686.1,979.9 1686.1,991.8 1688.9,991.8 1688.9,991.8 1691.7,991.8 1691.7,979.9 1694.5,979.9 1694.5,979.9 1697.3,979.9 1697.3,968.0 1700.1,968.0 1700.1,979.9 1702.9,979.9 1702.9,979.9 1705.7,979.9 1705.7,968.0 1708.5,968.0 1708.5,979.9 1711.3,979.9 1711.3,968.0 1714.1,968.0 1714.1,979.9 1716.9,979.9 1716.9,968.0 1719.7,968.0 1719.7,979.9 1722.5,979.9 1722.5,968.0 1725.3,968.0 1725.3,979.9 1728.1,979.9 1728.1,979.9 1730.9,979.9 1730.9,979.9 1733.7,979.9 1733.7,979.9 1736.5,979.9 1736.5,968.0 1739.3,968.0 1739.3,956.2 1742.1,956.2 1742.1,956.2 1744.9,956.2 1744.9,968.0 1747.7,968.0 1747.7,968.0 1750.5,968.0 1750.5,979.9 1753.3,979.9 1753.3,979.9 1756.1,979.9 1756.1,979.9 1758.9,979.9 1758.9,968.0 1761.7,968.0 1761.7,979.9 1764.5,979.9 1764.5,979.9 1767.3,979.9 1767.3,979.9 1770.1,979.9 1770.1,956.2 1772.9,956.2 1772.9,956.2 1775.7,956.2 1775.7,968.0 1778.5,968.0 1778.5,979.9 1781.3,979.9 1781.3,979.9 1784.1,979.9 1784.1,979.9 1786.9,979.9 1786.9,956.2 1789.7,956.2 1789.7,968.0 1792.5,968.0 1792.5,979.9 1795.3,979.9 1795.3,979.9 1798.1,979.9 1798.1,968.0 1800.9,968.0 1800.9,979.9 1803.7,979.9 1803.7,968.0 1806.5,968.0 1806.5,979.9 1809.3,979.9 1809.3,991.8 1812.1,991.8 1812.1,991.8 1814.9,991.8 1814.9,991.8 1817.7,991.8 1817.7,991.8 1820.5,991.8 1820.5,979.9 1823.3,979.9 1823.3,979.9 1826.1,979.9 1826.1,979.9 1828.9,979.9 1828.9,968.0 1831.7,968.0 1831.7,979.9 1834.5,979.9 1834.5,968.0 1837.3,968.0 1837.3,979.9 1840.1,979.9 1840.1,968.0 1842.9,968.0 1842.9,979.9 1845.7,979.9 1845.7,968.0 1848.5,968.0" fill="none" stroke="#e0386a" stroke-width="1.25" stroke-linejoin="miter"/>
<polyline points="1282.8,932.4 1285.6,932.4 1285.6,944.3 1288.4,944.3 1288.4,956.2 1291.2,956.2 1291.2,968.0 1294.0,968.0 1294.0,968.0 1296.8,968.0 1296.8,968.0 1299.6,968.0 1299.6,956.2 1302.4,956.2 1302.4,979.9 1305.2,979.9 1305.2,968.0 1308.0,968.0 1308.0,944.3 1310.8,944.3 1310.8,956.2 1313.6,956.2 1313.6,968.0 1316.4,968.0 1316.4,968.0 1319.2,968.0 1319.2,944.3 1322.0,944.3 1322.0,944.3 1324.8,944.3 1324.8,944.3 1327.6,944.3 1327.6,956.2 1330.4,956.2 1330.4,956.2 1333.2,956.2 1333.2,968.0 1336.0,968.0 1336.0,956.2 1338.8,956.2 1338.8,968.0 1341.6,968.0 1341.6,944.3 1344.4,944.3 1344.4,956.2 1347.2,956.2 1347.2,968.0 1350.0,968.0 1350.0,968.0 1352.8,968.0 1352.8,956.2 1355.6,956.2 1355.6,968.0 1358.4,968.0 1358.4,956.2 1361.2,956.2 1361.2,968.0 1364.0,968.0 1364.0,979.9 1366.8,979.9 1366.8,968.0 1369.6,968.0 1369.6,956.2 1372.4,956.2 1372.4,956.2 1375.2,956.2 1375.2,968.0 1378.0,968.0 1378.0,956.2 1380.8,956.2 1380.8,956.2 1383.6,956.2 1383.6,956.2 1386.4,956.2 1386.4,968.0 1389.2,968.0 1389.2,956.2 1392.0,956.2 1392.0,968.0 1394.8,968.0 1394.8,968.0 1397.6,968.0 1397.6,968.0 1400.4,968.0 1400.4,944.3 1403.2,944.3 1403.2,956.2 1406.0,956.2 1406.0,932.4 1408.8,932.4 1408.8,932.4 1411.6,932.4 1411.6,932.4 1414.4,932.4 1414.4,932.4 1417.2,932.4 1417.2,944.3 1420.0,944.3 1420.0,932.4 1422.8,932.4 1422.8,932.4 1425.6,932.4 1425.6,932.4 1428.4,932.4 1428.4,932.4 1431.2,932.4 1431.2,932.4 1434.0,932.4 1434.0,956.2 1436.8,956.2 1436.8,968.0 1439.6,968.0 1439.6,979.9 1442.4,979.9 1442.4,968.0 1445.2,968.0 1445.2,968.0 1448.0,968.0 1448.0,956.2 1450.8,956.2 1450.8,956.2 1453.6,956.2 1453.6,944.3 1456.4,944.3 1456.4,944.3 1459.2,944.3 1459.2,932.4 1462.0,932.4 1462.0,944.3 1464.8,944.3 1464.8,968.0 1467.6,968.0 1467.6,979.9 1470.4,979.9 1470.4,968.0 1473.2,968.0 1473.2,968.0 1476.0,968.0 1476.0,956.2 1478.8,956.2 1478.8,968.0 1481.6,968.0 1481.6,956.2 1484.4,956.2 1484.4,956.2 1487.2,956.2 1487.2,956.2 1490.0,956.2 1490.0,968.0 1492.8,968.0 1492.8,956.2 1495.6,956.2 1495.6,956.2 1498.4,956.2 1498.4,956.2 1501.2,956.2 1501.2,956.2 1504.0,956.2 1504.0,968.0 1506.8,968.0 1506.8,968.0 1509.6,968.0 1509.6,968.0 1512.4,968.0 1512.4,968.0 1515.2,968.0 1515.2,979.9 1518.0,979.9 1518.0,991.8 1520.8,991.8 1520.8,979.9 1523.6,979.9 1523.6,968.0 1526.4,968.0 1526.4,979.9 1529.2,979.9 1529.2,968.0 1532.0,968.0 1532.0,979.9 1534.8,979.9 1534.8,968.0 1537.6,968.0 1537.6,956.2 1540.4,956.2 1540.4,968.0 1543.2,968.0 1543.2,968.0 1546.0,968.0 1546.0,956.2 1548.8,956.2 1548.8,968.0 1551.6,968.0 1551.6,956.2 1554.4,956.2 1554.4,968.0 1557.2,968.0 1557.2,968.0 1560.0,968.0 1560.0,956.2 1562.8,956.2 1562.8,968.0 1565.7,968.0 1565.7,956.2 1568.5,956.2 1568.5,956.2 1571.3,956.2 1571.3,956.2 1574.1,956.2 1574.1,956.2 1576.9,956.2 1576.9,968.0 1579.7,968.0 1579.7,956.2 1582.5,956.2 1582.5,968.0 1585.3,968.0 1585.3,956.2 1588.1,956.2 1588.1,968.0 1590.9,968.0 1590.9,956.2 1593.7,956.2 1593.7,968.0 1596.5,968.0 1596.5,956.2 1599.3,956.2 1599.3,968.0 1602.1,968.0 1602.1,956.2 1604.9,956.2 1604.9,956.2 1607.7,956.2 1607.7,968.0 1610.5,968.0 1610.5,956.2 1613.3,956.2 1613.3,968.0 1616.1,968.0 1616.1,956.2 1618.9,956.2 1618.9,956.2 1621.7,956.2 1621.7,956.2 1624.5,956.2 1624.5,956.2 1627.3,956.2 1627.3,968.0 1630.1,968.0 1630.1,968.0 1632.9,968.0 1632.9,944.3 1635.7,944.3 1635.7,968.0 1638.5,968.0 1638.5,968.0 1641.3,968.0 1641.3,979.9 1644.1,979.9 1644.1,991.8 1646.9,991.8 1646.9,979.9 1649.7,979.9 1649.7,991.8 1652.5,991.8 1652.5,979.9 1655.3,979.9 1655.3,979.9 1658.1,979.9 1658.1,979.9 1660.9,979.9 1660.9,968.0 1663.7,968.0 1663.7,968.0 1666.5,968.0 1666.5,979.9 1669.3,979.9 1669.3,979.9 1672.1,979.9 1672.1,979.9 1674.9,979.9 1674.9,968.0 1677.7,968.0 1677.7,968.0 1680.5,968.0 1680.5,968.0 1683.3,968.0 1683.3,956.2 1686.1,956.2 1686.1,968.0 1688.9,968.0 1688.9,968.0 1691.7,968.0 1691.7,956.2 1694.5,956.2 1694.5,956.2 1697.3,956.2 1697.3,968.0 1700.1,968.0 1700.1,968.0 1702.9,968.0 1702.9,956.2 1705.7,956.2 1705.7,944.3 1708.5,944.3 1708.5,956.2 1711.3,956.2 1711.3,956.2 1714.1,956.2 1714.1,956.2 1716.9,956.2 1716.9,968.0 1719.7,968.0 1719.7,979.9 1722.5,979.9 1722.5,968.0 1725.3,968.0 1725.3,968.0 1728.1,968.0 1728.1,956.2 1730.9,956.2 1730.9,968.0 1733.7,968.0 1733.7,944.3 1736.5,944.3 1736.5,968.0 1739.3,968.0 1739.3,968.0 1742.1,968.0 1742.1,968.0 1744.9,968.0 1744.9,956.2 1747.7,956.2 1747.7,968.0 1750.5,968.0 1750.5,968.0 1753.3,968.0 1753.3,956.2 1756.1,956.2 1756.1,944.3 1758.9,944.3 1758.9,944.3 1761.7,944.3 1761.7,944.3 1764.5,944.3 1764.5,956.2 1767.3,956.2 1767.3,944.3 1770.1,944.3 1770.1,956.2 1772.9,956.2 1772.9,968.0 1775.7,968.0 1775.7,968.0 1778.5,968.0 1778.5,968.0 1781.3,968.0 1781.3,956.2 1784.1,956.2 1784.1,956.2 1786.9,956.2 1786.9,968.0 1789.7,968.0 1789.7,979.9 1792.5,979.9 1792.5,979.9 1795.3,979.9 1795.3,979.9 1798.1,979.9 1798.1,979.9 1800.9,979.9 1800.9,968.0 1803.7,968.0 1803.7,968.0 1806.5,968.0 1806.5,979.9 1809.3,979.9 1809.3,979.9 1812.1,979.9 1812.1,968.0 1814.9,968.0 1814.9,968.0 1817.7,968.0 1817.7,979.9 1820.5,979.9 1820.5,991.8 1823.3,991.8 1823.3,991.8 1826.1,991.8 1826.1,979.9 1828.9,979.9 1828.9,991.8 1831.7,991.8 1831.7,979.9 1834.5,979.9 1834.5,979.9 1837.3,979.9 1837.3,979.9 1840.1,979.9 1840.1,979.9 1842.9,979.9 1842.9,979.9 1845.7,979.9 1845.7,968.0 1848.5,968.0" fill="none" stroke="#f09a2e" stroke-width="1.25" stroke-linejoin="miter"/>
<polyline points="1282.8,944.3 1285.6,944.3 1285.6,920.5 1288.4,920.5 1288.4,920.5 1291.2,920.5 1291.2,932.4 1294.0,932.4 1294.0,944.3 1296.8,944.3 1296.8,944.3 1299.6,944.3 1299.6,944.3 1302.4,944.3 1302.4,932.4 1305.2,932.4 1305.2,956.2 1308.0,956.2 1308.0,956.2 1310.8,956.2 1310.8,956.2 1313.6,956.2 1313.6,956.2 1316.4,956.2 1316.4,956.2 1319.2,956.2 1319.2,944.3 1322.0,944.3 1322.0,944.3 1324.8,944.3 1324.8,944.3 1327.6,944.3 1327.6,944.3 1330.4,944.3 1330.4,944.3 1333.2,944.3 1333.2,944.3 1336.0,944.3 1336.0,956.2 1338.8,956.2 1338.8,944.3 1341.6,944.3 1341.6,944.3 1344.4,944.3 1344.4,932.4 1347.2,932.4 1347.2,944.3 1350.0,944.3 1350.0,920.5 1352.8,920.5 1352.8,932.4 1355.6,932.4 1355.6,944.3 1358.4,944.3 1358.4,944.3 1361.2,944.3 1361.2,932.4 1364.0,932.4 1364.0,920.5 1366.8,920.5 1366.8,932.4 1369.6,932.4 1369.6,932.4 1372.4,932.4 1372.4,932.4 1375.2,932.4 1375.2,944.3 1378.0,944.3 1378.0,944.3 1380.8,944.3 1380.8,932.4 1383.6,932.4 1383.6,944.3 1386.4,944.3 1386.4,956.2 1389.2,956.2 1389.2,956.2 1392.0,956.2 1392.0,956.2 1394.8,956.2 1394.8,968.0 1397.6,968.0 1397.6,968.0 1400.4,968.0 1400.4,944.3 1403.2,944.3 1403.2,956.2 1406.0,956.2 1406.0,956.2 1408.8,956.2 1408.8,944.3 1411.6,944.3 1411.6,944.3 1414.4,944.3 1414.4,944.3 1417.2,944.3 1417.2,944.3 1420.0,944.3 1420.0,944.3 1422.8,944.3 1422.8,932.4 1425.6,932.4 1425.6,944.3 1428.4,944.3 1428.4,944.3 1431.2,944.3 1431.2,932.4 1434.0,932.4 1434.0,932.4 1436.8,932.4 1436.8,932.4 1439.6,932.4 1439.6,932.4 1442.4,932.4 1442.4,956.2 1445.2,956.2 1445.2,944.3 1448.0,944.3 1448.0,968.0 1450.8,968.0 1450.8,968.0 1453.6,968.0 1453.6,968.0 1456.4,968.0 1456.4,968.0 1459.2,968.0 1459.2,956.2 1462.0,956.2 1462.0,968.0 1464.8,968.0 1464.8,968.0 1467.6,968.0 1467.6,968.0 1470.4,968.0 1470.4,956.2 1473.2,956.2 1473.2,956.2 1476.0,956.2 1476.0,932.4 1478.8,932.4 1478.8,932.4 1481.6,932.4 1481.6,932.4 1484.4,932.4 1484.4,944.3 1487.2,944.3 1487.2,932.4 1490.0,932.4 1490.0,932.4 1492.8,932.4 1492.8,932.4 1495.6,932.4 1495.6,932.4 1498.4,932.4 1498.4,944.3 1501.2,944.3 1501.2,944.3 1504.0,944.3 1504.0,932.4 1506.8,932.4 1506.8,932.4 1509.6,932.4 1509.6,932.4 1512.4,932.4 1512.4,944.3 1515.2,944.3 1515.2,944.3 1518.0,944.3 1518.0,944.3 1520.8,944.3 1520.8,956.2 1523.6,956.2 1523.6,944.3 1526.4,944.3 1526.4,944.3 1529.2,944.3 1529.2,944.3 1532.0,944.3 1532.0,932.4 1534.8,932.4 1534.8,932.4 1537.6,932.4 1537.6,932.4 1540.4,932.4 1540.4,944.3 1543.2,944.3 1543.2,932.4 1546.0,932.4 1546.0,932.4 1548.8,932.4 1548.8,920.5 1551.6,920.5 1551.6,932.4 1554.4,932.4 1554.4,932.4 1557.2,932.4 1557.2,932.4 1560.0,932.4 1560.0,920.5 1562.8,920.5 1562.8,920.5 1565.7,920.5 1565.7,920.5 1568.5,920.5 1568.5,920.5 1571.3,920.5 1571.3,920.5 1574.1,920.5 1574.1,920.5 1576.9,920.5 1576.9,920.5 1579.7,920.5 1579.7,920.5 1582.5,920.5 1582.5,920.5 1585.3,920.5 1585.3,920.5 1588.1,920.5 1588.1,920.5 1590.9,920.5 1590.9,920.5 1593.7,920.5 1593.7,908.7 1596.5,908.7 1596.5,908.7 1599.3,908.7 1599.3,920.5 1602.1,920.5 1602.1,920.5 1604.9,920.5 1604.9,908.7 1607.7,908.7 1607.7,908.7 1610.5,908.7 1610.5,908.7 1613.3,908.7 1613.3,908.7 1616.1,908.7 1616.1,908.7 1618.9,908.7 1618.9,920.5 1621.7,920.5 1621.7,920.5 1624.5,920.5 1624.5,920.5 1627.3,920.5 1627.3,932.4 1630.1,932.4 1630.1,932.4 1632.9,932.4 1632.9,944.3 1635.7,944.3 1635.7,956.2 1638.5,956.2 1638.5,956.2 1641.3,956.2 1641.3,968.0 1644.1,968.0 1644.1,968.0 1646.9,968.0 1646.9,968.0 1649.7,968.0 1649.7,968.0 1652.5,968.0 1652.5,968.0 1655.3,968.0 1655.3,944.3 1658.1,944.3 1658.1,944.3 1660.9,944.3 1660.9,944.3 1663.7,944.3 1663.7,932.4 1666.5,932.4 1666.5,932.4 1669.3,932.4 1669.3,944.3 1672.1,944.3 1672.1,944.3 1674.9,944.3 1674.9,932.4 1677.7,932.4 1677.7,932.4 1680.5,932.4 1680.5,944.3 1683.3,944.3 1683.3,944.3 1686.1,944.3 1686.1,932.4 1688.9,932.4 1688.9,932.4 1691.7,932.4 1691.7,932.4 1694.5,932.4 1694.5,956.2 1697.3,956.2 1697.3,944.3 1700.1,944.3 1700.1,932.4 1702.9,932.4 1702.9,908.7 1705.7,908.7 1705.7,908.7 1708.5,908.7 1708.5,920.5 1711.3,920.5 1711.3,932.4 1714.1,932.4 1714.1,932.4 1716.9,932.4 1716.9,944.3 1719.7,944.3 1719.7,944.3 1722.5,944.3 1722.5,944.3 1725.3,944.3 1725.3,956.2 1728.1,956.2 1728.1,968.0 1730.9,968.0 1730.9,968.0 1733.7,968.0 1733.7,956.2 1736.5,956.2 1736.5,944.3 1739.3,944.3 1739.3,944.3 1742.1,944.3 1742.1,932.4 1744.9,932.4 1744.9,932.4 1747.7,932.4 1747.7,944.3 1750.5,944.3 1750.5,932.4 1753.3,932.4 1753.3,932.4 1756.1,932.4 1756.1,932.4 1758.9,932.4 1758.9,944.3 1761.7,944.3 1761.7,932.4 1764.5,932.4 1764.5,944.3 1767.3,944.3 1767.3,944.3 1770.1,944.3 1770.1,944.3 1772.9,944.3 1772.9,944.3 1775.7,944.3 1775.7,944.3 1778.5,944.3 1778.5,932.4 1781.3,932.4 1781.3,932.4 1784.1,932.4 1784.1,944.3 1786.9,944.3 1786.9,932.4 1789.7,932.4 1789.7,920.5 1792.5,920.5 1792.5,920.5 1795.3,920.5 1795.3,920.5 1798.1,920.5 1798.1,920.5 1800.9,920.5 1800.9,932.4 1803.7,932.4 1803.7,932.4 1806.5,932.4 1806.5,920.5 1809.3,920.5 1809.3,932.4 1812.1,932.4 1812.1,944.3 1814.9,944.3 1814.9,944.3 1817.7,944.3 1817.7,944.3 1820.5,944.3 1820.5,932.4 1823.3,932.4 1823.3,932.4 1826.1,932.4 1826.1,944.3 1828.9,944.3 1828.9,932.4 1831.7,932.4 1831.7,944.3 1834.5,944.3 1834.5,944.3 1837.3,944.3 1837.3,944.3 1840.1,944.3 1840.1,944.3 1842.9,944.3 1842.9,944.3 1845.7,944.3 1845.7,944.3 1848.5,944.3" fill="none" stroke="#86b443" stroke-width="1.25" stroke-linejoin="miter"/>
<polyline points="1282.8,944.3 1285.6,944.3 1285.6,956.2 1288.4,956.2 1288.4,956.2 1291.2,956.2 1291.2,837.4 1294.0,837.4 1294.0,837.4 1296.8,837.4 1296.8,837.4 1299.6,837.4 1299.6,956.2 1302.4,956.2 1302.4,956.2 1305.2,956.2 1305.2,956.2 1308.0,956.2 1308.0,956.2 1310.8,956.2 1310.8,956.2 1313.6,956.2 1313.6,956.2 1316.4,956.2 1316.4,944.3 1319.2,944.3 1319.2,944.3 1322.0,944.3 1322.0,944.3 1324.8,944.3 1324.8,956.2 1327.6,956.2 1327.6,956.2 1330.4,956.2 1330.4,956.2 1333.2,956.2 1333.2,944.3 1336.0,944.3 1336.0,956.2 1338.8,956.2 1338.8,932.4 1341.6,932.4 1341.6,932.4 1344.4,932.4 1344.4,920.5 1347.2,920.5 1347.2,920.5 1350.0,920.5 1350.0,896.8 1352.8,896.8 1352.8,908.7 1355.6,908.7 1355.6,896.8 1358.4,896.8 1358.4,896.8 1361.2,896.8 1361.2,896.8 1364.0,896.8 1364.0,896.8 1366.8,896.8 1366.8,920.5 1369.6,920.5 1369.6,908.7 1372.4,908.7 1372.4,896.8 1375.2,896.8 1375.2,896.8 1378.0,896.8 1378.0,896.8 1380.8,896.8 1380.8,908.7 1383.6,908.7 1383.6,920.5 1386.4,920.5 1386.4,920.5 1389.2,920.5 1389.2,932.4 1392.0,932.4 1392.0,908.7 1394.8,908.7 1394.8,920.5 1397.6,920.5 1397.6,920.5 1400.4,920.5 1400.4,908.7 1403.2,908.7 1403.2,908.7 1406.0,908.7 1406.0,908.7 1408.8,908.7 1408.8,908.7 1411.6,908.7 1411.6,896.8 1414.4,896.8 1414.4,908.7 1417.2,908.7 1417.2,896.8 1420.0,896.8 1420.0,896.8 1422.8,896.8 1422.8,908.7 1425.6,908.7 1425.6,920.5 1428.4,920.5 1428.4,932.4 1431.2,932.4 1431.2,932.4 1434.0,932.4 1434.0,944.3 1436.8,944.3 1436.8,956.2 1439.6,956.2 1439.6,956.2 1442.4,956.2 1442.4,956.2 1445.2,956.2 1445.2,956.2 1448.0,956.2 1448.0,956.2 1450.8,956.2 1450.8,944.3 1453.6,944.3 1453.6,944.3 1456.4,944.3 1456.4,944.3 1459.2,944.3 1459.2,956.2 1462.0,956.2 1462.0,944.3 1464.8,944.3 1464.8,920.5 1467.6,920.5 1467.6,908.7 1470.4,908.7 1470.4,908.7 1473.2,908.7 1473.2,920.5 1476.0,920.5 1476.0,932.4 1478.8,932.4 1478.8,932.4 1481.6,932.4 1481.6,920.5 1484.4,920.5 1484.4,932.4 1487.2,932.4 1487.2,932.4 1490.0,932.4 1490.0,932.4 1492.8,932.4 1492.8,932.4 1495.6,932.4 1495.6,944.3 1498.4,944.3 1498.4,932.4 1501.2,932.4 1501.2,932.4 1504.0,932.4 1504.0,861.2 1506.8,861.2 1506.8,861.2 1509.6,861.2 1509.6,956.2 1512.4,956.2 1512.4,956.2 1515.2,956.2 1515.2,956.2 1518.0,956.2 1518.0,956.2 1520.8,956.2 1520.8,956.2 1523.6,956.2 1523.6,956.2 1526.4,956.2 1526.4,944.3 1529.2,944.3 1529.2,932.4 1532.0,932.4 1532.0,932.4 1534.8,932.4 1534.8,944.3 1537.6,944.3 1537.6,956.2 1540.4,956.2 1540.4,944.3 1543.2,944.3 1543.2,944.3 1546.0,944.3 1546.0,956.2 1548.8,956.2 1548.8,944.3 1551.6,944.3 1551.6,956.2 1554.4,956.2 1554.4,944.3 1557.2,944.3 1557.2,932.4 1560.0,932.4 1560.0,944.3 1562.8,944.3 1562.8,944.3 1565.7,944.3 1565.7,932.4 1568.5,932.4 1568.5,944.3 1571.3,944.3 1571.3,932.4 1574.1,932.4 1574.1,944.3 1576.9,944.3 1576.9,956.2 1579.7,956.2 1579.7,956.2 1582.5,956.2 1582.5,944.3 1585.3,944.3 1585.3,956.2 1588.1,956.2 1588.1,884.9 1590.9,884.9 1590.9,884.9 1593.7,884.9 1593.7,956.2 1596.5,956.2 1596.5,968.0 1599.3,968.0 1599.3,956.2 1602.1,956.2 1602.1,932.4 1604.9,932.4 1604.9,956.2 1607.7,956.2 1607.7,956.2 1610.5,956.2 1610.5,956.2 1613.3,956.2 1613.3,956.2 1616.1,956.2 1616.1,944.3 1618.9,944.3 1618.9,956.2 1621.7,956.2 1621.7,956.2 1624.5,956.2 1624.5,968.0 1627.3,968.0 1627.3,956.2 1630.1,956.2 1630.1,944.3 1632.9,944.3 1632.9,956.2 1635.7,956.2 1635.7,956.2 1638.5,956.2 1638.5,956.2 1641.3,956.2 1641.3,956.2 1644.1,956.2 1644.1,944.3 1646.9,944.3 1646.9,968.0 1649.7,968.0 1649.7,956.2 1652.5,956.2 1652.5,956.2 1655.3,956.2 1655.3,944.3 1658.1,944.3 1658.1,968.0 1660.9,968.0 1660.9,968.0 1663.7,968.0 1663.7,968.0 1666.5,968.0 1666.5,968.0 1669.3,968.0 1669.3,968.0 1672.1,968.0 1672.1,968.0 1674.9,968.0 1674.9,968.0 1677.7,968.0 1677.7,968.0 1680.5,968.0 1680.5,968.0 1683.3,968.0 1683.3,956.2 1686.1,956.2 1686.1,944.3 1688.9,944.3 1688.9,944.3 1691.7,944.3 1691.7,956.2 1694.5,956.2 1694.5,956.2 1697.3,956.2 1697.3,932.4 1700.1,932.4 1700.1,932.4 1702.9,932.4 1702.9,944.3 1705.7,944.3 1705.7,956.2 1708.5,956.2 1708.5,956.2 1711.3,956.2 1711.3,956.2 1714.1,956.2 1714.1,956.2 1716.9,956.2 1716.9,956.2 1719.7,956.2 1719.7,956.2 1722.5,956.2 1722.5,944.3 1725.3,944.3 1725.3,956.2 1728.1,956.2 1728.1,944.3 1730.9,944.3 1730.9,944.3 1733.7,944.3 1733.7,956.2 1736.5,956.2 1736.5,968.0 1739.3,968.0 1739.3,979.9 1742.1,979.9 1742.1,968.0 1744.9,968.0 1744.9,979.9 1747.7,979.9 1747.7,968.0 1750.5,968.0 1750.5,968.0 1753.3,968.0 1753.3,968.0 1756.1,968.0 1756.1,979.9 1758.9,979.9 1758.9,979.9 1761.7,979.9 1761.7,979.9 1764.5,979.9 1764.5,979.9 1767.3,979.9 1767.3,979.9 1770.1,979.9 1770.1,968.0 1772.9,968.0 1772.9,956.2 1775.7,956.2 1775.7,968.0 1778.5,968.0 1778.5,956.2 1781.3,956.2 1781.3,968.0 1784.1,968.0 1784.1,956.2 1786.9,956.2 1786.9,956.2 1789.7,956.2 1789.7,944.3 1792.5,944.3 1792.5,932.4 1795.3,932.4 1795.3,944.3 1798.1,944.3 1798.1,944.3 1800.9,944.3 1800.9,956.2 1803.7,956.2 1803.7,944.3 1806.5,944.3 1806.5,944.3 1809.3,944.3 1809.3,956.2 1812.1,956.2 1812.1,956.2 1814.9,956.2 1814.9,944.3 1817.7,944.3 1817.7,956.2 1820.5,956.2 1820.5,932.4 1823.3,932.4 1823.3,932.4 1826.1,932.4 1826.1,932.4 1828.9,932.4 1828.9,932.4 1831.7,932.4 1831.7,944.3 1834.5,944.3 1834.5,956.2 1837.3,956.2 1837.3,956.2 1840.1,956.2 1840.1,944.3 1842.9,944.3 1842.9,944.3 1845.7,944.3 1845.7,956.2 1848.5,956.2" fill="none" stroke="#3aa0e6" stroke-width="1.25" stroke-linejoin="miter"/>
<polyline points="1282.8,932.4 1285.6,932.4 1285.6,932.4 1288.4,932.4 1288.4,920.5 1291.2,920.5 1291.2,908.7 1294.0,908.7 1294.0,920.5 1296.8,920.5 1296.8,908.7 1299.6,908.7 1299.6,920.5 1302.4,920.5 1302.4,932.4 1305.2,932.4 1305.2,932.4 1308.0,932.4 1308.0,920.5 1310.8,920.5 1310.8,920.5 1313.6,920.5 1313.6,920.5 1316.4,920.5 1316.4,920.5 1319.2,920.5 1319.2,908.7 1322.0,908.7 1322.0,920.5 1324.8,920.5 1324.8,920.5 1327.6,920.5 1327.6,944.3 1330.4,944.3 1330.4,944.3 1333.2,944.3 1333.2,944.3 1336.0,944.3 1336.0,944.3 1338.8,944.3 1338.8,944.3 1341.6,944.3 1341.6,932.4 1344.4,932.4 1344.4,932.4 1347.2,932.4 1347.2,920.5 1350.0,920.5 1350.0,908.7 1352.8,908.7 1352.8,908.7 1355.6,908.7 1355.6,908.7 1358.4,908.7 1358.4,884.9 1361.2,884.9 1361.2,884.9 1364.0,884.9 1364.0,896.8 1366.8,896.8 1366.8,908.7 1369.6,908.7 1369.6,884.9 1372.4,884.9 1372.4,884.9 1375.2,884.9 1375.2,896.8 1378.0,896.8 1378.0,896.8 1380.8,896.8 1380.8,884.9 1383.6,884.9 1383.6,896.8 1386.4,896.8 1386.4,908.7 1389.2,908.7 1389.2,920.5 1392.0,920.5 1392.0,908.7 1394.8,908.7 1394.8,920.5 1397.6,920.5 1397.6,896.8 1400.4,896.8 1400.4,896.8 1403.2,896.8 1403.2,896.8 1406.0,896.8 1406.0,908.7 1408.8,908.7 1408.8,908.7 1411.6,908.7 1411.6,920.5 1414.4,920.5 1414.4,908.7 1417.2,908.7 1417.2,920.5 1420.0,920.5 1420.0,908.7 1422.8,908.7 1422.8,920.5 1425.6,920.5 1425.6,908.7 1428.4,908.7 1428.4,920.5 1431.2,920.5 1431.2,920.5 1434.0,920.5 1434.0,920.5 1436.8,920.5 1436.8,908.7 1439.6,908.7 1439.6,920.5 1442.4,920.5 1442.4,920.5 1445.2,920.5 1445.2,908.7 1448.0,908.7 1448.0,908.7 1450.8,908.7 1450.8,920.5 1453.6,920.5 1453.6,908.7 1456.4,908.7 1456.4,908.7 1459.2,908.7 1459.2,908.7 1462.0,908.7 1462.0,920.5 1464.8,920.5 1464.8,908.7 1467.6,908.7 1467.6,932.4 1470.4,932.4 1470.4,932.4 1473.2,932.4 1473.2,920.5 1476.0,920.5 1476.0,908.7 1478.8,908.7 1478.8,920.5 1481.6,920.5 1481.6,920.5 1484.4,920.5 1484.4,920.5 1487.2,920.5 1487.2,920.5 1490.0,920.5 1490.0,908.7 1492.8,908.7 1492.8,920.5 1495.6,920.5 1495.6,932.4 1498.4,932.4 1498.4,944.3 1501.2,944.3 1501.2,932.4 1504.0,932.4 1504.0,908.7 1506.8,908.7 1506.8,920.5 1509.6,920.5 1509.6,908.7 1512.4,908.7 1512.4,920.5 1515.2,920.5 1515.2,908.7 1518.0,908.7 1518.0,896.8 1520.8,896.8 1520.8,908.7 1523.6,908.7 1523.6,920.5 1526.4,920.5 1526.4,908.7 1529.2,908.7 1529.2,932.4 1532.0,932.4 1532.0,920.5 1534.8,920.5 1534.8,944.3 1537.6,944.3 1537.6,932.4 1540.4,932.4 1540.4,861.2 1543.2,861.2 1543.2,825.5 1546.0,825.5 1546.0,825.5 1548.8,825.5 1548.8,920.5 1551.6,920.5 1551.6,944.3 1554.4,944.3 1554.4,944.3 1557.2,944.3 1557.2,944.3 1560.0,944.3 1560.0,932.4 1562.8,932.4 1562.8,920.5 1565.7,920.5 1565.7,908.7 1568.5,908.7 1568.5,920.5 1571.3,920.5 1571.3,908.7 1574.1,908.7 1574.1,920.5 1576.9,920.5 1576.9,908.7 1579.7,908.7 1579.7,920.5 1582.5,920.5 1582.5,920.5 1585.3,920.5 1585.3,932.4 1588.1,932.4 1588.1,908.7 1590.9,908.7 1590.9,932.4 1593.7,932.4 1593.7,920.5 1596.5,920.5 1596.5,920.5 1599.3,920.5 1599.3,920.5 1602.1,920.5 1602.1,908.7 1604.9,908.7 1604.9,920.5 1607.7,920.5 1607.7,920.5 1610.5,920.5 1610.5,920.5 1613.3,920.5 1613.3,908.7 1616.1,908.7 1616.1,920.5 1618.9,920.5 1618.9,908.7 1621.7,908.7 1621.7,920.5 1624.5,920.5 1624.5,908.7 1627.3,908.7 1627.3,920.5 1630.1,920.5 1630.1,908.7 1632.9,908.7 1632.9,908.7 1635.7,908.7 1635.7,920.5 1638.5,920.5 1638.5,932.4 1641.3,932.4 1641.3,920.5 1644.1,920.5 1644.1,908.7 1646.9,908.7 1646.9,908.7 1649.7,908.7 1649.7,920.5 1652.5,920.5 1652.5,908.7 1655.3,908.7 1655.3,920.5 1658.1,920.5 1658.1,920.5 1660.9,920.5 1660.9,920.5 1663.7,920.5 1663.7,908.7 1666.5,908.7 1666.5,908.7 1669.3,908.7 1669.3,908.7 1672.1,908.7 1672.1,884.9 1674.9,884.9 1674.9,896.8 1677.7,896.8 1677.7,908.7 1680.5,908.7 1680.5,908.7 1683.3,908.7 1683.3,908.7 1686.1,908.7 1686.1,920.5 1688.9,920.5 1688.9,908.7 1691.7,908.7 1691.7,896.8 1694.5,896.8 1694.5,908.7 1697.3,908.7 1697.3,920.5 1700.1,920.5 1700.1,920.5 1702.9,920.5 1702.9,920.5 1705.7,920.5 1705.7,932.4 1708.5,932.4 1708.5,944.3 1711.3,944.3 1711.3,944.3 1714.1,944.3 1714.1,944.3 1716.9,944.3 1716.9,932.4 1719.7,932.4 1719.7,920.5 1722.5,920.5 1722.5,932.4 1725.3,932.4 1725.3,932.4 1728.1,932.4 1728.1,920.5 1730.9,920.5 1730.9,908.7 1733.7,908.7 1733.7,908.7 1736.5,908.7 1736.5,873.0 1739.3,873.0 1739.3,873.0 1742.1,873.0 1742.1,920.5 1744.9,920.5 1744.9,908.7 1747.7,908.7 1747.7,908.7 1750.5,908.7 1750.5,896.8 1753.3,896.8 1753.3,896.8 1756.1,896.8 1756.1,896.8 1758.9,896.8 1758.9,920.5 1761.7,920.5 1761.7,908.7 1764.5,908.7 1764.5,908.7 1767.3,908.7 1767.3,896.8 1770.1,896.8 1770.1,896.8 1772.9,896.8 1772.9,896.8 1775.7,896.8 1775.7,908.7 1778.5,908.7 1778.5,920.5 1781.3,920.5 1781.3,908.7 1784.1,908.7 1784.1,896.8 1786.9,896.8 1786.9,884.9 1789.7,884.9 1789.7,896.8 1792.5,896.8 1792.5,908.7 1795.3,908.7 1795.3,896.8 1798.1,896.8 1798.1,896.8 1800.9,896.8 1800.9,908.7 1803.7,908.7 1803.7,920.5 1806.5,920.5 1806.5,908.7 1809.3,908.7 1809.3,896.8 1812.1,896.8 1812.1,908.7 1814.9,908.7 1814.9,920.5 1817.7,920.5 1817.7,920.5 1820.5,920.5 1820.5,920.5 1823.3,920.5 1823.3,908.7 1826.1,908.7 1826.1,920.5 1828.9,920.5 1828.9,920.5 1831.7,920.5 1831.7,920.5 1834.5,920.5 1834.5,920.5 1837.3,920.5 1837.3,908.7 1840.1,908.7 1840.1,908.7 1842.9,908.7 1842.9,908.7 1845.7,908.7 1845.7,908.7 1848.5,908.7" fill="none" stroke="#e6d24a" stroke-width="1.25" stroke-linejoin="miter"/>
<line x1="1263.2" y1="1039.3" x2="1282.8" y2="1039.3" stroke="#d2d3d6" stroke-width="2.2"/>
<line x1="1263.2" y1="1009.6" x2="1282.8" y2="1009.6" stroke="#d2d3d6" stroke-width="2.2"/>
<line x1="1263.2" y1="979.9" x2="1282.8" y2="979.9" stroke="#d2d3d6" stroke-width="2.2"/>
<line x1="1263.2" y1="950.2" x2="1282.8" y2="950.2" stroke="#d2d3d6" stroke-width="2.2"/>
<line x1="1263.2" y1="920.5" x2="1282.8" y2="920.5" stroke="#d2d3d6" stroke-width="2.2"/>
<line x1="1263.2" y1="890.9" x2="1282.8" y2="890.9" stroke="#d2d3d6" stroke-width="2.2"/>
<line x1="1263.2" y1="861.2" x2="1282.8" y2="861.2" stroke="#d2d3d6" stroke-width="2.2"/>
<line x1="1263.2" y1="831.5" x2="1282.8" y2="831.5" stroke="#d2d3d6" stroke-width="2.2"/>
<line x1="1263.2" y1="801.8" x2="1282.8" y2="801.8" stroke="#d2d3d6" stroke-width="2.2"/>
<line x1="1282.8" y1="1039.3" x2="1282.8" y2="1045.3" stroke="#d2d3d6" stroke-width="2"/>
<line x1="1316.4" y1="1039.3" x2="1316.4" y2="1045.3" stroke="#d2d3d6" stroke-width="2"/>
<line x1="1350.0" y1="1039.3" x2="1350.0" y2="1045.3" stroke="#d2d3d6" stroke-width="2"/>
<line x1="1383.6" y1="1039.3" x2="1383.6" y2="1045.3" stroke="#d2d3d6" stroke-width="2"/>
<line x1="1417.2" y1="1039.3" x2="1417.2" y2="1045.3" stroke="#d2d3d6" stroke-width="2"/>
<line x1="1450.8" y1="1039.3" x2="1450.8" y2="1045.3" stroke="#d2d3d6" stroke-width="2"/>
<line x1="1484.5" y1="1039.3" x2="1484.5" y2="1045.3" stroke="#d2d3d6" stroke-width="2"/>
<line x1="1518.1" y1="1039.3" x2="1518.1" y2="1045.3" stroke="#d2d3d6" stroke-width="2"/>
<line x1="1551.7" y1="1039.3" x2="1551.7" y2="1045.3" stroke="#d2d3d6" stroke-width="2"/>
<line x1="1585.3" y1="1039.3" x2="1585.3" y2="1045.3" stroke="#d2d3d6" stroke-width="2"/>
<line x1="1618.9" y1="1039.3" x2="1618.9" y2="1045.3" stroke="#d2d3d6" stroke-width="2"/>
<line x1="1652.5" y1="1039.3" x2="1652.5" y2="1045.3" stroke="#d2d3d6" stroke-width="2"/>
<line x1="1686.1" y1="1039.3" x2="1686.1" y2="1045.3" stroke="#d2d3d6" stroke-width="2"/>
<line x1="1719.7" y1="1039.3" x2="1719.7" y2="1045.3" stroke="#d2d3d6" stroke-width="2"/>
<line x1="1753.3" y1="1039.3" x2="1753.3" y2="1045.3" stroke="#d2d3d6" stroke-width="2"/>
<line x1="1786.9" y1="1039.3" x2="1786.9" y2="1045.3" stroke="#d2d3d6" stroke-width="2"/>
<line x1="1820.6" y1="1039.3" x2="1820.6" y2="1045.3" stroke="#d2d3d6" stroke-width="2"/>
</svg>
<div class="t ns" style="right:798.8px;top:1033.1px;font-size:12.5px;color:#cfd0d4;">0</div>
<div class="t ns" style="right:798.8px;top:1003.4px;font-size:12.5px;color:#cfd0d4;">0.0025</div>
<div class="t ns" style="right:798.8px;top:973.7px;font-size:12.5px;color:#cfd0d4;">0.005</div>
<div class="t ns" style="right:798.8px;top:944.1px;font-size:12.5px;color:#cfd0d4;">0.0075</div>
<div class="t ns" style="right:798.8px;top:914.4px;font-size:12.5px;color:#cfd0d4;">0.01</div>
<div class="t ns" style="right:798.8px;top:884.7px;font-size:12.5px;color:#cfd0d4;">0.0125</div>
<div class="t ns" style="right:798.8px;top:855.0px;font-size:12.5px;color:#cfd0d4;">0.015</div>
<div class="t ns" style="right:798.8px;top:825.3px;font-size:12.5px;color:#cfd0d4;">0.0175</div>
<div class="t ns" style="right:798.8px;top:795.6px;font-size:12.5px;color:#cfd0d4;">0.02</div>
<div class="t ns" style="left:1350.0px;transform:translateX(-50%);top:1049.0px;font-size:12.4px;color:#cfd0d4;">02:00</div>
<div class="t ns" style="left:1417.2px;transform:translateX(-50%);top:1049.0px;font-size:12.4px;color:#cfd0d4;">04:00</div>
<div class="t ns" style="left:1484.5px;transform:translateX(-50%);top:1049.0px;font-size:12.4px;color:#cfd0d4;">06:00</div>
<div class="t ns" style="left:1551.7px;transform:translateX(-50%);top:1049.0px;font-size:12.4px;color:#cfd0d4;">08:00</div>
<div class="t ns" style="left:1618.9px;transform:translateX(-50%);top:1049.0px;font-size:12.4px;color:#cfd0d4;">10:00</div>
<div class="t ns" style="left:1686.1px;transform:translateX(-50%);top:1049.0px;font-size:12.4px;color:#cfd0d4;">12:00</div>
<div class="t ns" style="left:1753.3px;transform:translateX(-50%);top:1049.0px;font-size:12.4px;color:#cfd0d4;">14:00</div>
<div class="t ns" style="left:1820.6px;transform:translateX(-50%);top:1049.0px;font-size:12.4px;color:#cfd0d4;">16:00</div>
<div class="r" style="left:1308.7px;top:1098.2px;width:14px;height:13px;border:2px solid #e0553a;box-sizing:border-box;"></div>
<div class="t " style="left:1326.7px;top:1098.6px;font-size:12.1px;color:#f0f0f0;font-weight:700;-webkit-text-stroke:0;">Effective</div>
<div class="r" style="left:1386px;top:1098.2px;width:14px;height:13px;border:2px solid #4654c4;box-sizing:border-box;"></div>
<div class="t " style="left:1403.0px;top:1099.1px;font-size:11.4px;color:#f0f0f0;font-weight:700;-webkit-text-stroke:0;">LP1</div>
<div class="r" style="left:1445px;top:1098.2px;width:14px;height:13px;border:2px solid #3b8b7c;box-sizing:border-box;"></div>
<div class="t " style="left:1462.0px;top:1099.1px;font-size:11.4px;color:#f0f0f0;font-weight:700;-webkit-text-stroke:0;">LP2</div>
<div class="r" style="left:1495.9px;top:1098.2px;width:14px;height:13px;border:2px solid #eedc48;box-sizing:border-box;"></div>
<div class="t " style="left:1512.5px;top:1099.1px;font-size:11.4px;color:#f0f0f0;font-weight:700;-webkit-text-stroke:0;">LP3</div>
<div class="r" style="left:1545px;top:1098.2px;width:14px;height:13px;border:2px solid #9440c4;box-sizing:border-box;"></div>
<div class="t " style="left:1561.5px;top:1099.1px;font-size:11.4px;color:#f0f0f0;font-weight:700;-webkit-text-stroke:0;">LP4</div>
<div class="r" style="left:1587.7px;top:1098.2px;width:14px;height:13px;border:2px solid #3aa0e6;box-sizing:border-box;"></div>
<div class="t " style="left:1603.0px;top:1099.1px;font-size:11.4px;color:#f0f0f0;font-weight:700;-webkit-text-stroke:0;">LP5</div>
<div class="r" style="left:1630px;top:1098.2px;width:14px;height:13px;border:2px solid #86b443;box-sizing:border-box;"></div>
<div class="t " style="left:1645.5px;top:1099.1px;font-size:11.4px;color:#f0f0f0;font-weight:700;-webkit-text-stroke:0;">LP6</div>
<div class="r" style="left:1681.3px;top:1098.2px;width:14px;height:13px;border:2px solid #f09a2e;box-sizing:border-box;"></div>
<div class="t " style="left:1697.5px;top:1099.1px;font-size:11.4px;color:#f0f0f0;font-weight:700;-webkit-text-stroke:0;">LP7</div>
<div class="r" style="left:1725.8px;top:1098.2px;width:14px;height:13px;border:2px solid #e0386a;box-sizing:border-box;"></div>
<div class="t " style="left:1742.0px;top:1099.1px;font-size:11.4px;color:#f0f0f0;font-weight:700;-webkit-text-stroke:0;">LP8</div>
</div>
<div class="r" style="left:796px;top:1172px;width:459px;height:306px;
background:linear-gradient(180deg,#a9a9ab 0%,#c6c6c8 6%,#d4d4d6 25%,#d8d8da 60%,#d6d6d8 88%,#e8e8ea 94%,#b0b0b2 98%,#6e6e70 100%);"></div>
<div class="r" style="left:796px;top:1172px;width:459px;height:306px;
background:linear-gradient(90deg,rgba(0,0,0,0.12) 0%,rgba(0,0,0,0) 4%,rgba(0,0,0,0) 96%,rgba(0,0,0,0.12) 100%);"></div>
<div class="r" style="left:796px;top:1478px;width:459px;height:27px;
background:linear-gradient(90deg,#b8b8ba 0%,#8e8e90 2.5%,#d0d0d2 6%,#cbcbcd 15%,#c8c8ca 50%,#cbcbcd 85%,#d0d0d2 94%,#8e8e90 97.5%,#b8b8ba 100%);"></div>
<div class="r" style="left:803.0px;top:1505.0px;width:59.0px;height:2.0px;background:#2a2a2c;"></div>
<div class="r" style="left:1191.0px;top:1505.0px;width:59.0px;height:2.0px;background:#2a2a2c;"></div>
</body></html>
